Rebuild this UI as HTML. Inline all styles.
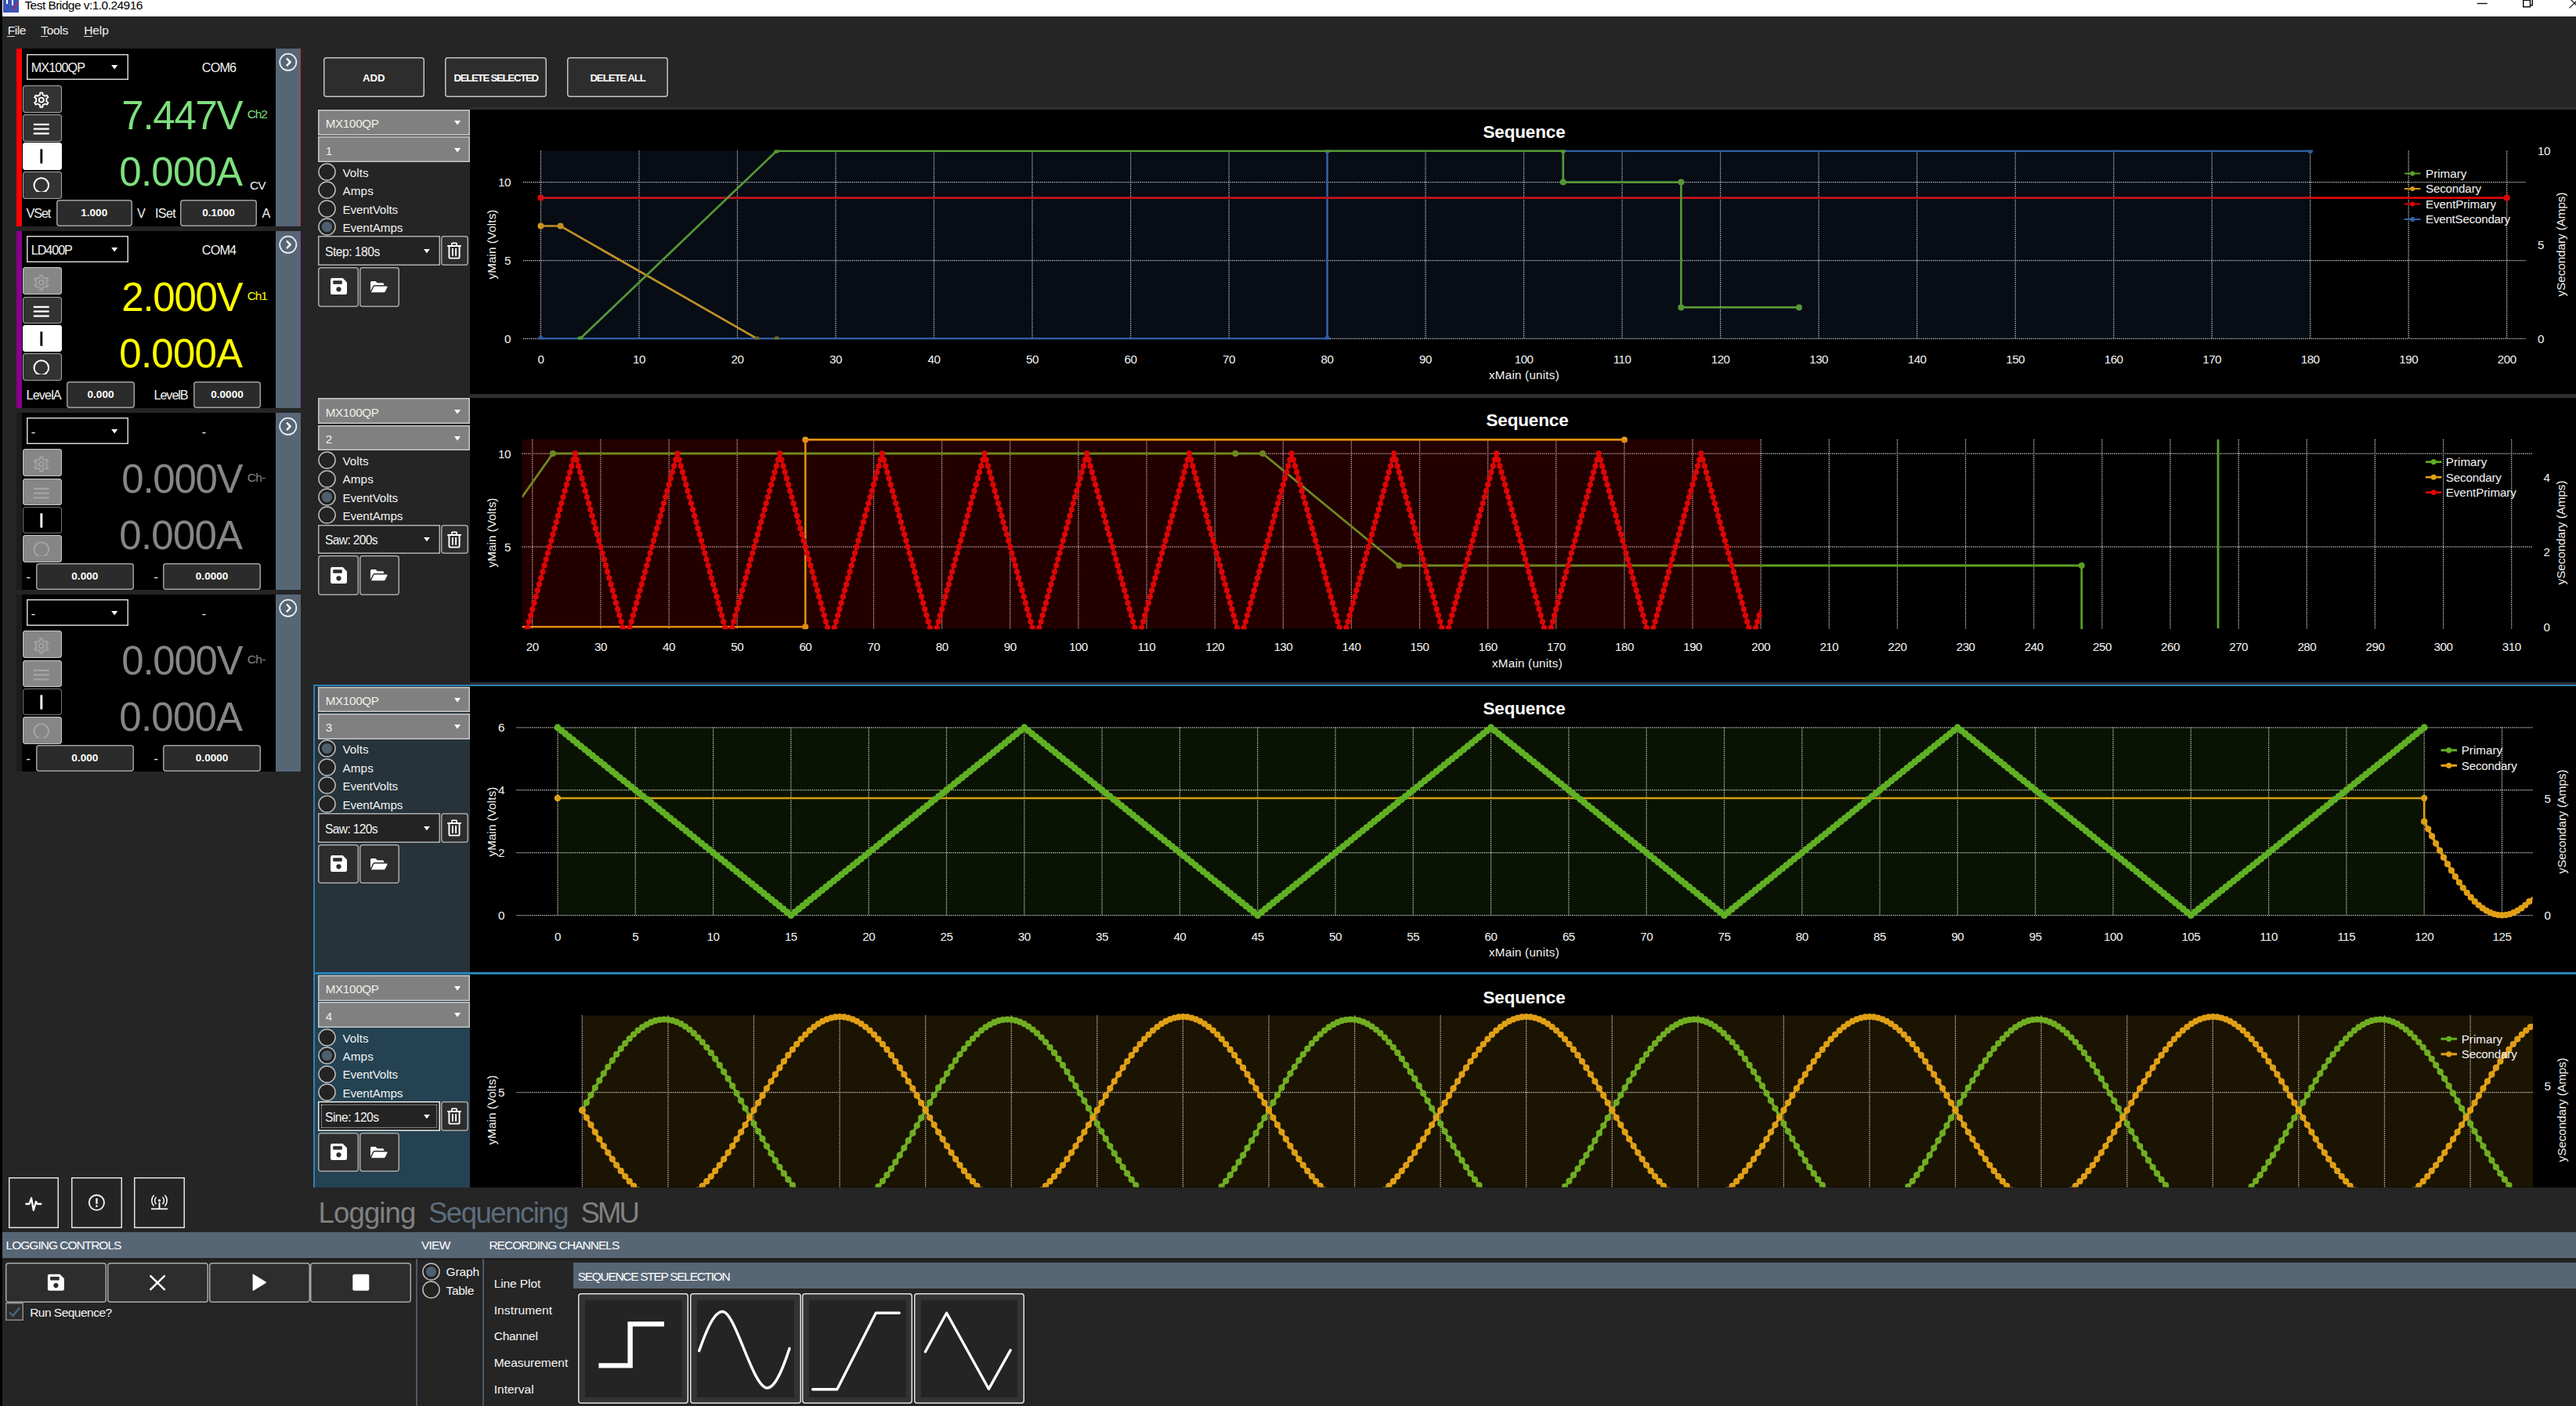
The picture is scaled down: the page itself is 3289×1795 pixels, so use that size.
<!DOCTYPE html>
<html><head><meta charset="utf-8"><title>Test Bridge</title><style>html,body{margin:0;padding:0;background:#252525;}
body{width:3289px;height:1795px;position:relative;overflow:hidden;font-family:"Liberation Sans",sans-serif;}
.a{position:absolute;box-sizing:content-box;}
.t{position:absolute;white-space:pre;line-height:normal;}
.v{transform:translate(-50%,-50%) rotate(-90deg);transform-origin:center;}
svg{overflow:visible;display:block}
</style></head><body>
<div class="a" style="left:0;top:0;width:3289px;height:1795px;background:#252525"></div>
<div class="a" style="left:0.0px;top:0.0px;width:3289.0px;height:21.0px;background:#fff;"></div>
<div class="a" style="left:4.0px;top:0.0px;width:20.0px;height:15.5px;background:#3a53b4;"></div>
<svg class="a" style="left:4px;top:0" width="20" height="16"><path d="M5 0V5M12 0V7" stroke="#fff" stroke-width="2" fill="none"/><path d="M14 12L18 3" stroke="#d02040" stroke-width="1.8"/></svg>
<div class="a" style="left:0;top:0;width:400px;height:21px;overflow:hidden">
<span class="t" style="left:31.4px;top:-2.2px;font-size:15.5px;color:#000;letter-spacing:-0.54px;">Test Bridge v:1.0.24916</span>
</div>
<svg class="a" style="left:3140px;top:0" width="149" height="21"><path d="M22.7 4.5H35.8" stroke="#111" stroke-width="1.4"/><path d="M81.7 -1V8.8H90.5V-1M81.7 0.2H90.5M91 6.7H93.3V-1" stroke="#111" stroke-width="1.5" fill="none"/><path d="M140.5 10.4L150 1M142.4 -0.6L150 7" stroke="#222" stroke-width="1.3"/></svg>
<span class="t" style="left:9.7px;top:29.7px;font-size:15.5px;color:#f0f0f0;letter-spacing:-0.47px;">File</span>
<div class="a" style="left:9.4px;top:45.6px;width:9.5px;height:1.3px;background:#e0e0e0;"></div>
<span class="t" style="left:52.2px;top:29.7px;font-size:15.5px;color:#f0f0f0;letter-spacing:-0.30px;">Tools</span>
<div class="a" style="left:51.9px;top:45.6px;width:9.5px;height:1.3px;background:#e0e0e0;"></div>
<span class="t" style="left:107.3px;top:29.7px;font-size:15.5px;color:#f0f0f0;letter-spacing:-0.12px;">Help</span>
<div class="a" style="left:107.0px;top:45.6px;width:11.2px;height:1.3px;background:#e0e0e0;"></div>
<div class="a" style="left:21.0px;top:62.3px;width:6.7px;height:226.8px;background:#ff0000;"></div>
<div class="a" style="left:27.7px;top:62.3px;width:324.0px;height:226.8px;background:#000;"></div>
<div class="a" style="left:351.5px;top:62.3px;width:32.0px;height:226.8px;background:#576675;"></div>
<div class="a" style="left:382.6px;top:62.3px;width:1.4px;height:226.8px;background:#c83040;"></div>
<div class="a" style="left:34.0px;top:68.9px;width:129.7px;height:33.6px;background:#000;box-shadow:inset 0 0 0 1.5px #d4d4d4;"></div>
<span class="t" style="left:39.8px;top:77.4px;font-size:16.2px;color:#f4f4f4;letter-spacing:-0.91px;">MX100QP</span>
<svg class="a" style="left:142px;top:83.3px" width="9" height="6"><path d="M0.2 0H8.2L4.2 5.4Z" fill="#fff"/></svg>
<span class="t" style="left:257.8px;top:77.4px;font-size:16.2px;color:#f4f4f4;letter-spacing:-0.83px;">COM6</span>
<svg class="a" style="left:355px;top:67.3px" width="26" height="26"><circle cx="12.8" cy="12.3" r="10.6" fill="none" stroke="#eef1f4" stroke-width="1.7"/><path d="M11 7.5L15.6 12.3L11 17.1" fill="none" stroke="#fff" stroke-width="2.4"/></svg>
<div class="a" style="left:28.5px;top:109.1px;width:50.7px;height:34.6px;background:#333;box-shadow:inset 0 0 0 1px #a8a8a8;border-radius:4px;"></div>
<div class="a" style="left:28.5px;top:146.3px;width:50.7px;height:34.6px;background:#333;box-shadow:inset 0 0 0 1px #a8a8a8;border-radius:4px;"></div>
<div class="a" style="left:28.5px;top:182.3px;width:50.7px;height:34.6px;background:#fff;box-shadow:inset 0 0 0 1px #fff;border-radius:4px;"></div>
<div class="a" style="left:28.5px;top:219.2px;width:50.7px;height:34.6px;background:#333;box-shadow:inset 0 0 0 1px #a8a8a8;border-radius:4px;"></div>
<svg class="a" style="left:28px;top:108.3px" width="52" height="148"><path d="M23.0 13.0L23.3 10.4L26.3 10.4L26.6 13.0L29.7 14.7L32.0 13.7L33.5 16.3L31.4 17.8L31.4 21.4L33.5 22.9L32.0 25.5L29.7 24.5L26.6 26.2L26.3 28.8L23.3 28.8L23.0 26.2L19.9 24.5L17.6 25.5L16.1 22.9L18.2 21.4L18.2 17.8L16.1 16.3L17.6 13.7L19.9 14.7Z" fill="none" stroke="#fff" stroke-width="1.9" stroke-linejoin="round"/><circle cx="24.8" cy="19.6" r="3" fill="none" stroke="#fff" stroke-width="1.9"/><rect x="14.8" y="49.75" width="19.9" height="2.3" fill="#fff"/><rect x="14.8" y="55.45" width="19.9" height="2.3" fill="#fff"/><rect x="14.8" y="61.35" width="19.9" height="2.3" fill="#fff"/><rect x="23.4" y="82.4" width="2.9" height="18.2" fill="#000"/><clipPath id="oc62"><rect x="10" y="115" width="30" height="22"/></clipPath><circle cx="24.8" cy="128.5" r="9.3" fill="none" stroke="#fff" stroke-width="2" clip-path="url(#oc62)"/></svg>
<span class="t" style="left:155.3px;top:117.7px;font-size:51px;color:#7ee07e;letter-spacing:-1.27px;">7.447V</span>
<span class="t" style="left:152.3px;top:190.1px;font-size:51px;color:#7ee07e;letter-spacing:-0.77px;">0.000A</span>
<span class="t" style="left:315.7px;top:137.0px;font-size:15.5px;color:#7ee07e;letter-spacing:-1.15px;">Ch2</span>
<span class="t" style="left:319.0px;top:228.0px;font-size:15.5px;color:#f4f4f4;letter-spacing:-1.02px;">CV</span>
<span class="t" style="left:33.6px;top:263.1px;font-size:16.2px;color:#f4f4f4;letter-spacing:-1.11px;">VSet</span>
<div class="a" style="left:72.0px;top:254.5px;width:96.5px;height:34.0px;background:#2b2b2b;box-shadow:inset 0 0 0 1.5px #a0a0a0;border-radius:4px;"></div>
<span class="t" style="left:103.2px;top:264.0px;font-size:13.6px;color:#fff;font-weight:bold;">1.000</span>
<span class="t" style="left:175.0px;top:263.1px;font-size:16.2px;color:#f4f4f4;">V</span>
<span class="t" style="left:198.0px;top:263.1px;font-size:16.2px;color:#f4f4f4;letter-spacing:-0.70px;">ISet</span>
<div class="a" style="left:230.0px;top:254.5px;width:98.0px;height:34.0px;background:#2b2b2b;box-shadow:inset 0 0 0 1.5px #a0a0a0;border-radius:4px;"></div>
<span class="t" style="left:258.2px;top:264.0px;font-size:13.6px;color:#fff;font-weight:bold;">0.1000</span>
<span class="t" style="left:334.5px;top:263.1px;font-size:16.2px;color:#f4f4f4;">A</span>
<div class="a" style="left:21.0px;top:294.5px;width:6.7px;height:226.8px;background:#88008a;"></div>
<div class="a" style="left:27.7px;top:294.5px;width:324.0px;height:226.8px;background:#000;"></div>
<div class="a" style="left:351.5px;top:294.5px;width:32.0px;height:226.8px;background:#576675;"></div>
<div class="a" style="left:382.6px;top:294.5px;width:1.4px;height:226.8px;background:#8a3aa0;"></div>
<div class="a" style="left:34.0px;top:301.1px;width:129.7px;height:33.6px;background:#000;box-shadow:inset 0 0 0 1.5px #d4d4d4;"></div>
<span class="t" style="left:39.8px;top:309.6px;font-size:16.2px;color:#f4f4f4;letter-spacing:-1.09px;">LD400P</span>
<svg class="a" style="left:142px;top:315.5px" width="9" height="6"><path d="M0.2 0H8.2L4.2 5.4Z" fill="#fff"/></svg>
<span class="t" style="left:257.8px;top:309.6px;font-size:16.2px;color:#f4f4f4;letter-spacing:-0.83px;">COM4</span>
<svg class="a" style="left:355px;top:299.5px" width="26" height="26"><circle cx="12.8" cy="12.3" r="10.6" fill="none" stroke="#eef1f4" stroke-width="1.7"/><path d="M11 7.5L15.6 12.3L11 17.1" fill="none" stroke="#fff" stroke-width="2.4"/></svg>
<div class="a" style="left:28.5px;top:341.3px;width:50.7px;height:34.6px;background:#868686;box-shadow:inset 0 0 0 1px #c8c8c8;border-radius:4px;"></div>
<div class="a" style="left:28.5px;top:378.5px;width:50.7px;height:34.6px;background:#333;box-shadow:inset 0 0 0 1px #a8a8a8;border-radius:4px;"></div>
<div class="a" style="left:28.5px;top:414.5px;width:50.7px;height:34.6px;background:#fff;box-shadow:inset 0 0 0 1px #fff;border-radius:4px;"></div>
<div class="a" style="left:28.5px;top:451.4px;width:50.7px;height:34.6px;background:#333;box-shadow:inset 0 0 0 1px #a8a8a8;border-radius:4px;"></div>
<svg class="a" style="left:28px;top:340.5px" width="52" height="148"><path d="M23.0 13.0L23.3 10.4L26.3 10.4L26.6 13.0L29.7 14.7L32.0 13.7L33.5 16.3L31.4 17.8L31.4 21.4L33.5 22.9L32.0 25.5L29.7 24.5L26.6 26.2L26.3 28.8L23.3 28.8L23.0 26.2L19.9 24.5L17.6 25.5L16.1 22.9L18.2 21.4L18.2 17.8L16.1 16.3L17.6 13.7L19.9 14.7Z" fill="none" stroke="#a4a4a4" stroke-width="1.9" stroke-linejoin="round"/><circle cx="24.8" cy="19.6" r="3" fill="none" stroke="#a4a4a4" stroke-width="1.9"/><rect x="14.8" y="49.75" width="19.9" height="2.3" fill="#fff"/><rect x="14.8" y="55.45" width="19.9" height="2.3" fill="#fff"/><rect x="14.8" y="61.35" width="19.9" height="2.3" fill="#fff"/><rect x="23.4" y="82.4" width="2.9" height="18.2" fill="#000"/><clipPath id="oc294"><rect x="10" y="115" width="30" height="22"/></clipPath><circle cx="24.8" cy="128.5" r="9.3" fill="none" stroke="#fff" stroke-width="2" clip-path="url(#oc294)"/></svg>
<span class="t" style="left:155.3px;top:349.9px;font-size:51px;color:#ffff00;letter-spacing:-1.27px;">2.000V</span>
<span class="t" style="left:152.3px;top:422.3px;font-size:51px;color:#ffff00;letter-spacing:-0.77px;">0.000A</span>
<span class="t" style="left:315.7px;top:369.2px;font-size:15.5px;color:#ffff00;letter-spacing:-1.15px;">Ch1</span>
<span class="t" style="left:33.6px;top:495.3px;font-size:16.2px;color:#f4f4f4;letter-spacing:-0.89px;">LevelA</span>
<div class="a" style="left:84.7px;top:486.7px;width:87.7px;height:34.0px;background:#2b2b2b;box-shadow:inset 0 0 0 1.5px #a0a0a0;border-radius:4px;"></div>
<span class="t" style="left:111.5px;top:496.2px;font-size:13.6px;color:#fff;font-weight:bold;">0.000</span>
<span class="t" style="left:196.5px;top:495.3px;font-size:16.2px;color:#f4f4f4;letter-spacing:-1.07px;">LevelB</span>
<div class="a" style="left:246.8px;top:486.7px;width:86.4px;height:34.0px;background:#2b2b2b;box-shadow:inset 0 0 0 1.5px #a0a0a0;border-radius:4px;"></div>
<span class="t" style="left:269.2px;top:496.2px;font-size:13.6px;color:#fff;font-weight:bold;">0.0000</span>
<div class="a" style="left:21.0px;top:526.5px;width:6.7px;height:226.8px;background:#1c1c1c;"></div>
<div class="a" style="left:27.7px;top:526.5px;width:324.0px;height:226.8px;background:#000;"></div>
<div class="a" style="left:351.5px;top:526.5px;width:32.0px;height:226.8px;background:#576675;"></div>
<div class="a" style="left:34.0px;top:533.1px;width:129.7px;height:33.6px;background:#000;box-shadow:inset 0 0 0 1.5px #d4d4d4;"></div>
<span class="t" style="left:39.8px;top:541.6px;font-size:16.2px;color:#f4f4f4;">-</span>
<svg class="a" style="left:142px;top:547.5px" width="9" height="6"><path d="M0.2 0H8.2L4.2 5.4Z" fill="#fff"/></svg>
<span class="t" style="left:257.8px;top:541.6px;font-size:16.2px;color:#f4f4f4;">-</span>
<svg class="a" style="left:355px;top:531.5px" width="26" height="26"><circle cx="12.8" cy="12.3" r="10.6" fill="none" stroke="#eef1f4" stroke-width="1.7"/><path d="M11 7.5L15.6 12.3L11 17.1" fill="none" stroke="#fff" stroke-width="2.4"/></svg>
<div class="a" style="left:28.5px;top:573.3px;width:50.7px;height:34.6px;background:#868686;box-shadow:inset 0 0 0 1px #c8c8c8;border-radius:4px;"></div>
<div class="a" style="left:28.5px;top:610.5px;width:50.7px;height:34.6px;background:#868686;box-shadow:inset 0 0 0 1px #c8c8c8;border-radius:4px;"></div>
<div class="a" style="left:28.5px;top:646.5px;width:50.7px;height:34.6px;background:#000;box-shadow:inset 0 0 0 1px #777;border-radius:4px;"></div>
<div class="a" style="left:28.5px;top:683.4px;width:50.7px;height:34.6px;background:#868686;box-shadow:inset 0 0 0 1px #c8c8c8;border-radius:4px;"></div>
<svg class="a" style="left:28px;top:572.5px" width="52" height="148"><path d="M23.0 13.0L23.3 10.4L26.3 10.4L26.6 13.0L29.7 14.7L32.0 13.7L33.5 16.3L31.4 17.8L31.4 21.4L33.5 22.9L32.0 25.5L29.7 24.5L26.6 26.2L26.3 28.8L23.3 28.8L23.0 26.2L19.9 24.5L17.6 25.5L16.1 22.9L18.2 21.4L18.2 17.8L16.1 16.3L17.6 13.7L19.9 14.7Z" fill="none" stroke="#a4a4a4" stroke-width="1.9" stroke-linejoin="round"/><circle cx="24.8" cy="19.6" r="3" fill="none" stroke="#a4a4a4" stroke-width="1.9"/><rect x="14.8" y="49.75" width="19.9" height="2.3" fill="#a4a4a4"/><rect x="14.8" y="55.45" width="19.9" height="2.3" fill="#a4a4a4"/><rect x="14.8" y="61.35" width="19.9" height="2.3" fill="#a4a4a4"/><rect x="23.4" y="82.4" width="2.9" height="18.2" fill="#fff"/><clipPath id="oc526"><rect x="10" y="115" width="30" height="22"/></clipPath><circle cx="24.8" cy="128.5" r="9.3" fill="none" stroke="#a4a4a4" stroke-width="2" clip-path="url(#oc526)"/></svg>
<span class="t" style="left:155.3px;top:581.9px;font-size:51px;color:#868686;letter-spacing:-1.27px;">0.000V</span>
<span class="t" style="left:152.3px;top:654.3px;font-size:51px;color:#868686;letter-spacing:-0.77px;">0.000A</span>
<span class="t" style="left:315.7px;top:601.2px;font-size:15.5px;color:#868686;letter-spacing:-0.66px;">Ch-</span>
<span class="t" style="left:33.6px;top:727.3px;font-size:16.2px;color:#f4f4f4;">-</span>
<div class="a" style="left:45.9px;top:718.7px;width:124.8px;height:34.0px;background:#2b2b2b;box-shadow:inset 0 0 0 1.5px #a0a0a0;border-radius:4px;"></div>
<span class="t" style="left:91.3px;top:728.2px;font-size:13.6px;color:#fff;font-weight:bold;">0.000</span>
<span class="t" style="left:196.5px;top:727.3px;font-size:16.2px;color:#f4f4f4;">-</span>
<div class="a" style="left:208.0px;top:718.7px;width:125.2px;height:34.0px;background:#2b2b2b;box-shadow:inset 0 0 0 1.5px #a0a0a0;border-radius:4px;"></div>
<span class="t" style="left:249.8px;top:728.2px;font-size:13.6px;color:#fff;font-weight:bold;">0.0000</span>
<div class="a" style="left:21.0px;top:758.5px;width:6.7px;height:226.8px;background:#1c1c1c;"></div>
<div class="a" style="left:27.7px;top:758.5px;width:324.0px;height:226.8px;background:#000;"></div>
<div class="a" style="left:351.5px;top:758.5px;width:32.0px;height:226.8px;background:#576675;"></div>
<div class="a" style="left:34.0px;top:765.1px;width:129.7px;height:33.6px;background:#000;box-shadow:inset 0 0 0 1.5px #d4d4d4;"></div>
<span class="t" style="left:39.8px;top:773.6px;font-size:16.2px;color:#f4f4f4;">-</span>
<svg class="a" style="left:142px;top:779.5px" width="9" height="6"><path d="M0.2 0H8.2L4.2 5.4Z" fill="#fff"/></svg>
<span class="t" style="left:257.8px;top:773.6px;font-size:16.2px;color:#f4f4f4;">-</span>
<svg class="a" style="left:355px;top:763.5px" width="26" height="26"><circle cx="12.8" cy="12.3" r="10.6" fill="none" stroke="#eef1f4" stroke-width="1.7"/><path d="M11 7.5L15.6 12.3L11 17.1" fill="none" stroke="#fff" stroke-width="2.4"/></svg>
<div class="a" style="left:28.5px;top:805.3px;width:50.7px;height:34.6px;background:#868686;box-shadow:inset 0 0 0 1px #c8c8c8;border-radius:4px;"></div>
<div class="a" style="left:28.5px;top:842.5px;width:50.7px;height:34.6px;background:#868686;box-shadow:inset 0 0 0 1px #c8c8c8;border-radius:4px;"></div>
<div class="a" style="left:28.5px;top:878.5px;width:50.7px;height:34.6px;background:#000;box-shadow:inset 0 0 0 1px #777;border-radius:4px;"></div>
<div class="a" style="left:28.5px;top:915.4px;width:50.7px;height:34.6px;background:#868686;box-shadow:inset 0 0 0 1px #c8c8c8;border-radius:4px;"></div>
<svg class="a" style="left:28px;top:804.5px" width="52" height="148"><path d="M23.0 13.0L23.3 10.4L26.3 10.4L26.6 13.0L29.7 14.7L32.0 13.7L33.5 16.3L31.4 17.8L31.4 21.4L33.5 22.9L32.0 25.5L29.7 24.5L26.6 26.2L26.3 28.8L23.3 28.8L23.0 26.2L19.9 24.5L17.6 25.5L16.1 22.9L18.2 21.4L18.2 17.8L16.1 16.3L17.6 13.7L19.9 14.7Z" fill="none" stroke="#a4a4a4" stroke-width="1.9" stroke-linejoin="round"/><circle cx="24.8" cy="19.6" r="3" fill="none" stroke="#a4a4a4" stroke-width="1.9"/><rect x="14.8" y="49.75" width="19.9" height="2.3" fill="#a4a4a4"/><rect x="14.8" y="55.45" width="19.9" height="2.3" fill="#a4a4a4"/><rect x="14.8" y="61.35" width="19.9" height="2.3" fill="#a4a4a4"/><rect x="23.4" y="82.4" width="2.9" height="18.2" fill="#fff"/><clipPath id="oc758"><rect x="10" y="115" width="30" height="22"/></clipPath><circle cx="24.8" cy="128.5" r="9.3" fill="none" stroke="#a4a4a4" stroke-width="2" clip-path="url(#oc758)"/></svg>
<span class="t" style="left:155.3px;top:813.9px;font-size:51px;color:#868686;letter-spacing:-1.27px;">0.000V</span>
<span class="t" style="left:152.3px;top:886.3px;font-size:51px;color:#868686;letter-spacing:-0.77px;">0.000A</span>
<span class="t" style="left:315.7px;top:833.2px;font-size:15.5px;color:#868686;letter-spacing:-0.66px;">Ch-</span>
<span class="t" style="left:33.6px;top:959.3px;font-size:16.2px;color:#f4f4f4;">-</span>
<div class="a" style="left:45.9px;top:950.7px;width:124.8px;height:34.0px;background:#2b2b2b;box-shadow:inset 0 0 0 1.5px #a0a0a0;border-radius:4px;"></div>
<span class="t" style="left:91.3px;top:960.2px;font-size:13.6px;color:#fff;font-weight:bold;">0.000</span>
<span class="t" style="left:196.5px;top:959.3px;font-size:16.2px;color:#f4f4f4;">-</span>
<div class="a" style="left:208.0px;top:950.7px;width:125.2px;height:34.0px;background:#2b2b2b;box-shadow:inset 0 0 0 1.5px #a0a0a0;border-radius:4px;"></div>
<span class="t" style="left:249.8px;top:960.2px;font-size:13.6px;color:#fff;font-weight:bold;">0.0000</span>
<div class="a" style="left:412.6px;top:73.4px;width:129.2px;height:50.8px;background:#2d2d2d;box-shadow:inset 0 0 0 1.5px #c4c4c4;border-radius:4px;"></div>
<span class="t" style="left:462.9px;top:92.1px;font-size:13.2px;color:#fff;font-weight:bold;letter-spacing:-0.03px;">ADD</span>
<div class="a" style="left:568.2px;top:73.4px;width:129.8px;height:50.8px;background:#2d2d2d;box-shadow:inset 0 0 0 1.5px #c4c4c4;border-radius:4px;"></div>
<span class="t" style="left:579.4px;top:92.1px;font-size:13.2px;color:#fff;font-weight:bold;letter-spacing:-1.24px;">DELETE SELECTED</span>
<div class="a" style="left:724.0px;top:73.4px;width:129.2px;height:50.8px;background:#2d2d2d;box-shadow:inset 0 0 0 1.5px #c4c4c4;border-radius:4px;"></div>
<span class="t" style="left:753.4px;top:92.1px;font-size:13.2px;color:#fff;font-weight:bold;letter-spacing:-1.04px;">DELETE ALL</span>
<div class="a" style="left:600.2px;top:136.7px;width:2688.8px;height:369.3px;background:#2e2e2e;"></div>
<div class="a" style="left:600.2px;top:140.0px;width:2688.8px;height:362.7px;background:#000;"></div>
<div class="a" style="left:600.2px;top:505.0px;width:2688.8px;height:369.3px;background:#2e2e2e;"></div>
<div class="a" style="left:600.2px;top:507.7px;width:2688.8px;height:363.3px;background:#000;"></div>
<div class="a" style="left:400.0px;top:874.3px;width:2889.0px;height:368.3px;background:#2a7fb2;"></div>
<div class="a" style="left:401.5px;top:876.0px;width:198.7px;height:365.0px;background:#26333a;"></div>
<div class="a" style="left:600.2px;top:876.0px;width:2688.8px;height:365.0px;background:#000;"></div>
<div class="a" style="left:400.0px;top:1242.6px;width:2889.0px;height:273.0px;background:#2a86bc;"></div>
<div class="a" style="left:401.5px;top:1244.3px;width:198.7px;height:271.3px;background:#244252;"></div>
<div class="a" style="left:600.2px;top:1244.3px;width:2688.8px;height:271.3px;background:#000;"></div>
<div class="a" style="left:406.0px;top:140.1px;width:194.2px;height:32.6px;background:#808080;box-shadow:inset 0 0 0 1.5px #c6c6c6;"></div>
<span class="t" style="left:415.7px;top:149.3px;font-size:15.2px;color:#f0f0ea;letter-spacing:-0.30px;">MX100QP</span>
<svg class="a" style="left:580px;top:154.2px" width="9" height="6"><path d="M0 0H8L4 5.6Z" fill="#fff"/></svg>
<div class="a" style="left:406.0px;top:174.4px;width:194.2px;height:32.6px;background:#808080;box-shadow:inset 0 0 0 1.5px #c6c6c6;"></div>
<span class="t" style="left:415.7px;top:183.6px;font-size:15.2px;color:#f0f0ea;">1</span>
<svg class="a" style="left:580px;top:188.5px" width="9" height="6"><path d="M0 0H8L4 5.6Z" fill="#fff"/></svg>
<svg class="a" style="left:405px;top:206.8px" width="25" height="25"><circle cx="12.5" cy="12.5" r="10.6" fill="#232323" stroke="#bdbdbd" stroke-width="1.5"/></svg>
<span class="t" style="left:437.5px;top:211.7px;font-size:15.2px;color:#f2f2f2;letter-spacing:0.05px;">Volts</span>
<svg class="a" style="left:405px;top:230.2px" width="25" height="25"><circle cx="12.5" cy="12.5" r="10.6" fill="#232323" stroke="#bdbdbd" stroke-width="1.5"/></svg>
<span class="t" style="left:437.5px;top:235.1px;font-size:15.2px;color:#f2f2f2;letter-spacing:0.16px;">Amps</span>
<svg class="a" style="left:405px;top:253.6px" width="25" height="25"><circle cx="12.5" cy="12.5" r="10.6" fill="#232323" stroke="#bdbdbd" stroke-width="1.5"/></svg>
<span class="t" style="left:437.5px;top:258.5px;font-size:15.2px;color:#f2f2f2;letter-spacing:-0.13px;">EventVolts</span>
<svg class="a" style="left:405px;top:277.0px" width="25" height="25"><circle cx="12.5" cy="12.5" r="10.6" fill="#232323" stroke="#bdbdbd" stroke-width="1.5"/><circle cx="12.5" cy="12.5" r="6.6" fill="#4f6070"/></svg>
<span class="t" style="left:437.5px;top:281.9px;font-size:15.2px;color:#f2f2f2;letter-spacing:-0.10px;">EventAmps</span>
<div class="a" style="left:406.0px;top:301.4px;width:155.8px;height:37.6px;background:#232323;box-shadow:inset 0 0 0 1.5px #b0b0b0;"></div>
<span class="t" style="left:415.0px;top:313.0px;font-size:15.6px;color:#f4f4f4;letter-spacing:-0.48px;">Step: 180s</span>
<svg class="a" style="left:541.4px;top:318.1px" width="9" height="6"><path d="M0 0H7.8L3.9 5.2Z" fill="#fff"/></svg>
<div class="a" style="left:562.6px;top:301.4px;width:35.1px;height:37.6px;background:#2d2d2d;box-shadow:inset 0 0 0 1.5px #a8a8a8;border-radius:4px;"></div>
<svg class="a" style="left:570px;top:309.4px" width="20" height="24"><path d="M1.2 5H18.8" stroke="#fff" stroke-width="2"/><path d="M6.8 4.4V2.2Q6.8 1.4 7.6 1.4H12.4Q13.2 1.4 13.2 2.2V4.4" fill="none" stroke="#fff" stroke-width="1.6"/><path d="M3.4 5.5V19Q3.4 20.6 5 20.6H15Q16.6 20.6 16.6 19V5.5" fill="none" stroke="#fff" stroke-width="1.9"/><path d="M7.9 8V17.8M12.1 8V17.8" stroke="#fff" stroke-width="1.9"/></svg>
<div class="a" style="left:406.0px;top:341.0px;width:51.5px;height:50.5px;background:#2d2d2d;box-shadow:inset 0 0 0 1.5px #a8a8a8;border-radius:4px;"></div>
<div class="a" style="left:458.5px;top:341.0px;width:51.1px;height:50.5px;background:#2d2d2d;box-shadow:inset 0 0 0 1.5px #a8a8a8;border-radius:4px;"></div>
<svg class="a" style="left:421.5px;top:355.2px" width="21" height="21"><path d="M2.2 0H15.6L21 5.4V18.8Q21 21 18.8 21H2.2Q0 21 0 18.8V2.2Q0 0 2.2 0Z" fill="#fff"/><rect x="3.2" y="3.2" width="11.6" height="4.6" rx="0.8" fill="#2d2d2d"/><circle cx="10.5" cy="14.3" r="3.1" fill="#2d2d2d"/></svg>
<svg class="a" style="left:473px;top:358.9px" width="22" height="15"><path d="M0 1.6Q0 0 1.6 0H6.6L8.8 2.2H15.6Q17.2 2.2 17.2 3.8V5H5.2Q3.8 5 3.2 6.2L0 12.6Z" fill="#fff"/><path d="M4.6 6.4H20.6Q22.2 6.4 21.5 7.8L18.6 13.4Q18.1 14.2 17.1 14.2H0.9Z" fill="#fff"/></svg>
<div class="a" style="left:406.0px;top:508.4px;width:194.2px;height:32.6px;background:#808080;box-shadow:inset 0 0 0 1.5px #c6c6c6;"></div>
<span class="t" style="left:415.7px;top:517.6px;font-size:15.2px;color:#f0f0ea;letter-spacing:-0.30px;">MX100QP</span>
<svg class="a" style="left:580px;top:522.5px" width="9" height="6"><path d="M0 0H8L4 5.6Z" fill="#fff"/></svg>
<div class="a" style="left:406.0px;top:542.7px;width:194.2px;height:32.6px;background:#808080;box-shadow:inset 0 0 0 1.5px #c6c6c6;"></div>
<span class="t" style="left:415.7px;top:551.9px;font-size:15.2px;color:#f0f0ea;">2</span>
<svg class="a" style="left:580px;top:556.8px" width="9" height="6"><path d="M0 0H8L4 5.6Z" fill="#fff"/></svg>
<svg class="a" style="left:405px;top:575.1px" width="25" height="25"><circle cx="12.5" cy="12.5" r="10.6" fill="#232323" stroke="#bdbdbd" stroke-width="1.5"/></svg>
<span class="t" style="left:437.5px;top:580.0px;font-size:15.2px;color:#f2f2f2;letter-spacing:0.05px;">Volts</span>
<svg class="a" style="left:405px;top:598.5px" width="25" height="25"><circle cx="12.5" cy="12.5" r="10.6" fill="#232323" stroke="#bdbdbd" stroke-width="1.5"/></svg>
<span class="t" style="left:437.5px;top:603.4px;font-size:15.2px;color:#f2f2f2;letter-spacing:0.16px;">Amps</span>
<svg class="a" style="left:405px;top:621.9px" width="25" height="25"><circle cx="12.5" cy="12.5" r="10.6" fill="#232323" stroke="#bdbdbd" stroke-width="1.5"/><circle cx="12.5" cy="12.5" r="6.6" fill="#4f6070"/></svg>
<span class="t" style="left:437.5px;top:626.8px;font-size:15.2px;color:#f2f2f2;letter-spacing:-0.13px;">EventVolts</span>
<svg class="a" style="left:405px;top:645.3px" width="25" height="25"><circle cx="12.5" cy="12.5" r="10.6" fill="#232323" stroke="#bdbdbd" stroke-width="1.5"/></svg>
<span class="t" style="left:437.5px;top:650.2px;font-size:15.2px;color:#f2f2f2;letter-spacing:-0.10px;">EventAmps</span>
<div class="a" style="left:406.0px;top:669.7px;width:155.8px;height:37.6px;background:#232323;box-shadow:inset 0 0 0 1.5px #b0b0b0;"></div>
<span class="t" style="left:415.0px;top:681.3px;font-size:15.6px;color:#f4f4f4;letter-spacing:-0.65px;">Saw: 200s</span>
<svg class="a" style="left:541.4px;top:686.4px" width="9" height="6"><path d="M0 0H7.8L3.9 5.2Z" fill="#fff"/></svg>
<div class="a" style="left:562.6px;top:669.7px;width:35.1px;height:37.6px;background:#2d2d2d;box-shadow:inset 0 0 0 1.5px #a8a8a8;border-radius:4px;"></div>
<svg class="a" style="left:570px;top:677.7px" width="20" height="24"><path d="M1.2 5H18.8" stroke="#fff" stroke-width="2"/><path d="M6.8 4.4V2.2Q6.8 1.4 7.6 1.4H12.4Q13.2 1.4 13.2 2.2V4.4" fill="none" stroke="#fff" stroke-width="1.6"/><path d="M3.4 5.5V19Q3.4 20.6 5 20.6H15Q16.6 20.6 16.6 19V5.5" fill="none" stroke="#fff" stroke-width="1.9"/><path d="M7.9 8V17.8M12.1 8V17.8" stroke="#fff" stroke-width="1.9"/></svg>
<div class="a" style="left:406.0px;top:709.3px;width:51.5px;height:50.5px;background:#2d2d2d;box-shadow:inset 0 0 0 1.5px #a8a8a8;border-radius:4px;"></div>
<div class="a" style="left:458.5px;top:709.3px;width:51.1px;height:50.5px;background:#2d2d2d;box-shadow:inset 0 0 0 1.5px #a8a8a8;border-radius:4px;"></div>
<svg class="a" style="left:421.5px;top:723.5px" width="21" height="21"><path d="M2.2 0H15.6L21 5.4V18.8Q21 21 18.8 21H2.2Q0 21 0 18.8V2.2Q0 0 2.2 0Z" fill="#fff"/><rect x="3.2" y="3.2" width="11.6" height="4.6" rx="0.8" fill="#2d2d2d"/><circle cx="10.5" cy="14.3" r="3.1" fill="#2d2d2d"/></svg>
<svg class="a" style="left:473px;top:727.2px" width="22" height="15"><path d="M0 1.6Q0 0 1.6 0H6.6L8.8 2.2H15.6Q17.2 2.2 17.2 3.8V5H5.2Q3.8 5 3.2 6.2L0 12.6Z" fill="#fff"/><path d="M4.6 6.4H20.6Q22.2 6.4 21.5 7.8L18.6 13.4Q18.1 14.2 17.1 14.2H0.9Z" fill="#fff"/></svg>
<div class="a" style="left:406.0px;top:876.7px;width:194.2px;height:32.6px;background:#808080;box-shadow:inset 0 0 0 1.5px #c6c6c6;"></div>
<span class="t" style="left:415.7px;top:885.9px;font-size:15.2px;color:#f0f0ea;letter-spacing:-0.30px;">MX100QP</span>
<svg class="a" style="left:580px;top:890.8px" width="9" height="6"><path d="M0 0H8L4 5.6Z" fill="#fff"/></svg>
<div class="a" style="left:406.0px;top:911.0px;width:194.2px;height:32.6px;background:#808080;box-shadow:inset 0 0 0 1.5px #c6c6c6;"></div>
<span class="t" style="left:415.7px;top:920.2px;font-size:15.2px;color:#f0f0ea;">3</span>
<svg class="a" style="left:580px;top:925.1px" width="9" height="6"><path d="M0 0H8L4 5.6Z" fill="#fff"/></svg>
<svg class="a" style="left:405px;top:943.4px" width="25" height="25"><circle cx="12.5" cy="12.5" r="10.6" fill="#232323" stroke="#bdbdbd" stroke-width="1.5"/><circle cx="12.5" cy="12.5" r="6.6" fill="#4f6070"/></svg>
<span class="t" style="left:437.5px;top:948.3px;font-size:15.2px;color:#f2f2f2;letter-spacing:0.05px;">Volts</span>
<svg class="a" style="left:405px;top:966.8px" width="25" height="25"><circle cx="12.5" cy="12.5" r="10.6" fill="#232323" stroke="#bdbdbd" stroke-width="1.5"/></svg>
<span class="t" style="left:437.5px;top:971.7px;font-size:15.2px;color:#f2f2f2;letter-spacing:0.16px;">Amps</span>
<svg class="a" style="left:405px;top:990.2px" width="25" height="25"><circle cx="12.5" cy="12.5" r="10.6" fill="#232323" stroke="#bdbdbd" stroke-width="1.5"/></svg>
<span class="t" style="left:437.5px;top:995.1px;font-size:15.2px;color:#f2f2f2;letter-spacing:-0.13px;">EventVolts</span>
<svg class="a" style="left:405px;top:1013.6px" width="25" height="25"><circle cx="12.5" cy="12.5" r="10.6" fill="#232323" stroke="#bdbdbd" stroke-width="1.5"/></svg>
<span class="t" style="left:437.5px;top:1018.5px;font-size:15.2px;color:#f2f2f2;letter-spacing:-0.10px;">EventAmps</span>
<div class="a" style="left:406.0px;top:1038.0px;width:155.8px;height:37.6px;background:#232323;box-shadow:inset 0 0 0 1.5px #b0b0b0;"></div>
<span class="t" style="left:415.0px;top:1049.6px;font-size:15.6px;color:#f4f4f4;letter-spacing:-0.65px;">Saw: 120s</span>
<svg class="a" style="left:541.4px;top:1054.7px" width="9" height="6"><path d="M0 0H7.8L3.9 5.2Z" fill="#fff"/></svg>
<div class="a" style="left:562.6px;top:1038.0px;width:35.1px;height:37.6px;background:#2d2d2d;box-shadow:inset 0 0 0 1.5px #a8a8a8;border-radius:4px;"></div>
<svg class="a" style="left:570px;top:1046.0px" width="20" height="24"><path d="M1.2 5H18.8" stroke="#fff" stroke-width="2"/><path d="M6.8 4.4V2.2Q6.8 1.4 7.6 1.4H12.4Q13.2 1.4 13.2 2.2V4.4" fill="none" stroke="#fff" stroke-width="1.6"/><path d="M3.4 5.5V19Q3.4 20.6 5 20.6H15Q16.6 20.6 16.6 19V5.5" fill="none" stroke="#fff" stroke-width="1.9"/><path d="M7.9 8V17.8M12.1 8V17.8" stroke="#fff" stroke-width="1.9"/></svg>
<div class="a" style="left:406.0px;top:1077.6px;width:51.5px;height:50.5px;background:#2d2d2d;box-shadow:inset 0 0 0 1.5px #a8a8a8;border-radius:4px;"></div>
<div class="a" style="left:458.5px;top:1077.6px;width:51.1px;height:50.5px;background:#2d2d2d;box-shadow:inset 0 0 0 1.5px #a8a8a8;border-radius:4px;"></div>
<svg class="a" style="left:421.5px;top:1091.8px" width="21" height="21"><path d="M2.2 0H15.6L21 5.4V18.8Q21 21 18.8 21H2.2Q0 21 0 18.8V2.2Q0 0 2.2 0Z" fill="#fff"/><rect x="3.2" y="3.2" width="11.6" height="4.6" rx="0.8" fill="#2d2d2d"/><circle cx="10.5" cy="14.3" r="3.1" fill="#2d2d2d"/></svg>
<svg class="a" style="left:473px;top:1095.5px" width="22" height="15"><path d="M0 1.6Q0 0 1.6 0H6.6L8.8 2.2H15.6Q17.2 2.2 17.2 3.8V5H5.2Q3.8 5 3.2 6.2L0 12.6Z" fill="#fff"/><path d="M4.6 6.4H20.6Q22.2 6.4 21.5 7.8L18.6 13.4Q18.1 14.2 17.1 14.2H0.9Z" fill="#fff"/></svg>
<div class="a" style="left:406.0px;top:1245.0px;width:194.2px;height:32.6px;background:#808080;box-shadow:inset 0 0 0 1.5px #c6c6c6;"></div>
<span class="t" style="left:415.7px;top:1254.2px;font-size:15.2px;color:#f0f0ea;letter-spacing:-0.30px;">MX100QP</span>
<svg class="a" style="left:580px;top:1259.1px" width="9" height="6"><path d="M0 0H8L4 5.6Z" fill="#fff"/></svg>
<div class="a" style="left:406.0px;top:1279.3px;width:194.2px;height:32.6px;background:#808080;box-shadow:inset 0 0 0 1.5px #c6c6c6;"></div>
<span class="t" style="left:415.7px;top:1288.5px;font-size:15.2px;color:#f0f0ea;">4</span>
<svg class="a" style="left:580px;top:1293.4px" width="9" height="6"><path d="M0 0H8L4 5.6Z" fill="#fff"/></svg>
<svg class="a" style="left:405px;top:1311.7px" width="25" height="25"><circle cx="12.5" cy="12.5" r="10.6" fill="#232323" stroke="#bdbdbd" stroke-width="1.5"/></svg>
<span class="t" style="left:437.5px;top:1316.6px;font-size:15.2px;color:#f2f2f2;letter-spacing:0.05px;">Volts</span>
<svg class="a" style="left:405px;top:1335.1px" width="25" height="25"><circle cx="12.5" cy="12.5" r="10.6" fill="#232323" stroke="#bdbdbd" stroke-width="1.5"/><circle cx="12.5" cy="12.5" r="6.6" fill="#4f6070"/></svg>
<span class="t" style="left:437.5px;top:1340.0px;font-size:15.2px;color:#f2f2f2;letter-spacing:0.16px;">Amps</span>
<svg class="a" style="left:405px;top:1358.5px" width="25" height="25"><circle cx="12.5" cy="12.5" r="10.6" fill="#232323" stroke="#bdbdbd" stroke-width="1.5"/></svg>
<span class="t" style="left:437.5px;top:1363.4px;font-size:15.2px;color:#f2f2f2;letter-spacing:-0.13px;">EventVolts</span>
<svg class="a" style="left:405px;top:1381.9px" width="25" height="25"><circle cx="12.5" cy="12.5" r="10.6" fill="#232323" stroke="#bdbdbd" stroke-width="1.5"/></svg>
<span class="t" style="left:437.5px;top:1386.8px;font-size:15.2px;color:#f2f2f2;letter-spacing:-0.10px;">EventAmps</span>
<div class="a" style="left:406.0px;top:1406.3px;width:155.8px;height:37.6px;background:#232323;box-shadow:inset 0 0 0 1.5px #e8e8e8;"></div>
<div class="a" style="left:409.5px;top:1409.8px;width:148.8px;height:30.6px;box-sizing:border-box;border:1px dotted #d0d0d0;"></div>
<span class="t" style="left:415.0px;top:1417.9px;font-size:15.6px;color:#f4f4f4;letter-spacing:-0.52px;">Sine: 120s</span>
<svg class="a" style="left:541.4px;top:1423.0px" width="9" height="6"><path d="M0 0H7.8L3.9 5.2Z" fill="#fff"/></svg>
<div class="a" style="left:562.6px;top:1406.3px;width:35.1px;height:37.6px;background:#2d2d2d;box-shadow:inset 0 0 0 1.5px #a8a8a8;border-radius:4px;"></div>
<svg class="a" style="left:570px;top:1414.3px" width="20" height="24"><path d="M1.2 5H18.8" stroke="#fff" stroke-width="2"/><path d="M6.8 4.4V2.2Q6.8 1.4 7.6 1.4H12.4Q13.2 1.4 13.2 2.2V4.4" fill="none" stroke="#fff" stroke-width="1.6"/><path d="M3.4 5.5V19Q3.4 20.6 5 20.6H15Q16.6 20.6 16.6 19V5.5" fill="none" stroke="#fff" stroke-width="1.9"/><path d="M7.9 8V17.8M12.1 8V17.8" stroke="#fff" stroke-width="1.9"/></svg>
<div class="a" style="left:406.0px;top:1445.9px;width:51.5px;height:50.5px;background:#2d2d2d;box-shadow:inset 0 0 0 1.5px #a8a8a8;border-radius:4px;"></div>
<div class="a" style="left:458.5px;top:1445.9px;width:51.1px;height:50.5px;background:#2d2d2d;box-shadow:inset 0 0 0 1.5px #a8a8a8;border-radius:4px;"></div>
<svg class="a" style="left:421.5px;top:1460.1px" width="21" height="21"><path d="M2.2 0H15.6L21 5.4V18.8Q21 21 18.8 21H2.2Q0 21 0 18.8V2.2Q0 0 2.2 0Z" fill="#fff"/><rect x="3.2" y="3.2" width="11.6" height="4.6" rx="0.8" fill="#2d2d2d"/><circle cx="10.5" cy="14.3" r="3.1" fill="#2d2d2d"/></svg>
<svg class="a" style="left:473px;top:1463.8px" width="22" height="15"><path d="M0 1.6Q0 0 1.6 0H6.6L8.8 2.2H15.6Q17.2 2.2 17.2 3.8V5H5.2Q3.8 5 3.2 6.2L0 12.6Z" fill="#fff"/><path d="M4.6 6.4H20.6Q22.2 6.4 21.5 7.8L18.6 13.4Q18.1 14.2 17.1 14.2H0.9Z" fill="#fff"/></svg>
<svg class="a" style="left:0;top:0" width="3289" height="1795" viewBox="0 0 3289 1795"><defs><marker id="mg" markerWidth="10" markerHeight="10" refX="5" refY="5" markerUnits="userSpaceOnUse"><circle cx="5" cy="5" r="4.1" fill="#60b024"/></marker><marker id="mo" markerWidth="10" markerHeight="10" refX="5" refY="5" markerUnits="userSpaceOnUse"><circle cx="5" cy="5" r="4.1" fill="#e0a016"/></marker><marker id="mr" markerWidth="10" markerHeight="10" refX="5" refY="5" markerUnits="userSpaceOnUse"><circle cx="5" cy="5" r="3.7" fill="#da0808"/></marker><marker id="mg3" markerWidth="10" markerHeight="10" refX="5" refY="5" markerUnits="userSpaceOnUse"><circle cx="5" cy="5" r="4.45" fill="#60b024"/></marker><clipPath id="c1"><rect x="668" y="191.6" width="2557" height="241.9"/></clipPath><clipPath id="c2"><rect x="666.5" y="556" width="2567" height="247.3"/></clipPath><clipPath id="c3"><rect x="659.5" y="920" width="2574.2" height="255"/></clipPath><clipPath id="c4"><rect x="659.5" y="1290" width="2574.4" height="225.6"/></clipPath></defs><g stroke="#dcdcdc" stroke-width="1.25" stroke-dasharray="1.25 1.25" fill="none"><path d="M690.5 192.6V432.4M816.0 192.6V432.4M941.5 192.6V432.4M1067.0 192.6V432.4M1192.5 192.6V432.4M1318.0 192.6V432.4M1443.6 192.6V432.4M1569.1 192.6V432.4M1694.6 192.6V432.4M1820.1 192.6V432.4M1945.6 192.6V432.4M2071.1 192.6V432.4M2196.6 192.6V432.4M2322.1 192.6V432.4M2447.6 192.6V432.4M2573.2 192.6V432.4M2698.7 192.6V432.4M2824.2 192.6V432.4M2949.7 192.6V432.4M3075.2 192.6V432.4M3200.7 192.6V432.4M668.0 432.4H3225.0M668.0 332.5H3225.0M668.0 232.6H3225.0"/></g><g clip-path="url(#c1)"><polyline points="690.5,432.4 1694.6,432.4 1694.6,192.6 2949.7,192.6" fill="none" stroke="#2f5ea2" stroke-width="2.7"/><circle cx="690.5" cy="432.4" r="3.4" fill="#2f5ea2"/><circle cx="1694.6" cy="432.4" r="3.4" fill="#2f5ea2"/><circle cx="1694.6" cy="192.6" r="3.4" fill="#2f5ea2"/><circle cx="2949.7" cy="192.6" r="3.4" fill="#2f5ea2"/><polyline points="690.5,288.5 715.6,288.5 966.6,432.4" fill="none" stroke="#d49814" stroke-width="2.7"/><circle cx="690.5" cy="288.5" r="4" fill="#d49814"/><circle cx="715.6" cy="288.5" r="4" fill="#d49814"/><circle cx="966.6" cy="432.4" r="3.2" fill="#7a6a20"/><circle cx="991.7" cy="432.4" r="3.2" fill="#7a6a20"/><polyline points="690.5,252.6 3200.7,252.6" fill="none" stroke="#da0808" stroke-width="2.7"/><circle cx="690.5" cy="252.6" r="4" fill="#da0808"/><circle cx="3200.7" cy="252.6" r="4" fill="#da0808"/><polyline points="740.7,432.4 991.7,192.6 1995.8,192.6 1995.8,232.6 2146.4,232.6 2146.4,392.4 2297.0,392.4" fill="none" stroke="#5aa026" stroke-width="2.7"/><circle cx="1995.8" cy="232.6" r="4" fill="#5aa026"/><circle cx="2146.4" cy="232.6" r="4" fill="#5aa026"/><circle cx="2146.4" cy="392.4" r="4" fill="#5aa026"/><circle cx="2297.0" cy="392.4" r="4" fill="#5aa026"/><circle cx="740.7" cy="432.4" r="3.2" fill="#5aa026"/><circle cx="991.7" cy="192.6" r="3.2" fill="#5aa026"/><circle cx="1995.8" cy="192.6" r="3.2" fill="#5aa026"/></g><rect x="690.5" y="192.6" width="2259.2" height="239.8" fill="rgba(56,96,170,0.125)"/><path d="M3070.0 221.5h20.5" stroke="#5aa026" stroke-width="2"/><circle cx="3080.2" cy="221.5" r="3" fill="#5aa026"/><path d="M3070.0 241.0h20.5" stroke="#d49814" stroke-width="2"/><circle cx="3080.2" cy="241.0" r="3" fill="#d49814"/><path d="M3070.0 260.5h20.5" stroke="#da0808" stroke-width="2"/><circle cx="3080.2" cy="260.5" r="3" fill="#da0808"/><path d="M3070.0 280.0h20.5" stroke="#3264aa" stroke-width="2"/><circle cx="3080.2" cy="280.0" r="3" fill="#3264aa"/><g stroke="#dcdcdc" stroke-width="1.25" stroke-dasharray="1.25 1.25" fill="none"><path d="M679.8 561.0V802.3M766.9 561.0V802.3M854.1 561.0V802.3M941.2 561.0V802.3M1028.3 561.0V802.3M1115.5 561.0V802.3M1202.6 561.0V802.3M1289.7 561.0V802.3M1376.9 561.0V802.3M1464.0 561.0V802.3M1551.2 561.0V802.3M1638.3 561.0V802.3M1725.4 561.0V802.3M1812.6 561.0V802.3M1899.7 561.0V802.3M1986.8 561.0V802.3M2074.0 561.0V802.3M2161.1 561.0V802.3M2248.2 561.0V802.3M2335.4 561.0V802.3M2422.5 561.0V802.3M2509.6 561.0V802.3M2596.8 561.0V802.3M2683.9 561.0V802.3M2771.0 561.0V802.3M2858.2 561.0V802.3M2945.3 561.0V802.3M3032.4 561.0V802.3M3119.6 561.0V802.3M3206.7 561.0V802.3M666.5 698.2H3233.5M666.5 579.0H3233.5"/></g><g clip-path="url(#c2)"><polyline points="666.5,634.6 705.9,579.0 1577.3,579.0 1612.1,579.0 1786.4,722.0 2657.8,722.0 2657.8,865.1" fill="none" stroke="#5aa026" stroke-width="2.8"/><circle cx="705.9" cy="579.0" r="4" fill="#5aa026"/><circle cx="1577.3" cy="579.0" r="4" fill="#5aa026"/><circle cx="1612.1" cy="579.0" r="4" fill="#5aa026"/><circle cx="1786.4" cy="722.0" r="4" fill="#5aa026"/><circle cx="2657.8" cy="722.0" r="4" fill="#5aa026"/><path d="M2832.0 561.0V802.3" stroke="#5aa026" stroke-width="2.8"/><polyline points="666.5,800.3 1028.3,800.3 1028.3,561.4 2074.0,561.4" fill="none" stroke="#e0a016" stroke-width="2.6"/><circle cx="1028.3" cy="800.3" r="4" fill="#e0a016"/><circle cx="1028.3" cy="561.4" r="4" fill="#e0a016"/><circle cx="2074.0" cy="561.4" r="4" fill="#e0a016"/><polyline points="666.7,809.5 668.9,817.4 671.1,809.5 673.3,801.5 675.4,793.6 677.6,785.6 679.8,777.7 682.0,769.7 684.2,761.8 686.3,753.8 688.5,745.9 690.7,737.9 692.9,730.0 695.0,722.0 697.2,714.1 699.4,706.1 701.6,698.2 703.8,690.3 705.9,682.3 708.1,674.4 710.3,666.4 712.5,658.5 714.7,650.5 716.8,642.6 719.0,634.6 721.2,626.7 723.4,618.7 725.5,610.8 727.7,602.8 729.9,594.9 732.1,586.9 734.3,579.0 736.4,586.9 738.6,594.9 740.8,602.8 743.0,610.8 745.2,618.7 747.3,626.7 749.5,634.6 751.7,642.6 753.9,650.5 756.0,658.5 758.2,666.4 760.4,674.4 762.6,682.3 764.8,690.3 766.9,698.2 769.1,706.1 771.3,714.1 773.5,722.0 775.6,730.0 777.8,737.9 780.0,745.9 782.2,753.8 784.4,761.8 786.5,769.7 788.7,777.7 790.9,785.6 793.1,793.6 795.3,801.5 797.4,809.5 799.6,817.4 801.8,809.5 804.0,801.5 806.1,793.6 808.3,785.6 810.5,777.7 812.7,769.7 814.9,761.8 817.0,753.8 819.2,745.9 821.4,737.9 823.6,730.0 825.8,722.0 827.9,714.1 830.1,706.1 832.3,698.2 834.5,690.3 836.6,682.3 838.8,674.4 841.0,666.4 843.2,658.5 845.4,650.5 847.5,642.6 849.7,634.6 851.9,626.7 854.1,618.7 856.2,610.8 858.4,602.8 860.6,594.9 862.8,586.9 865.0,579.0 867.1,586.9 869.3,594.9 871.5,602.8 873.7,610.8 875.9,618.7 878.0,626.7 880.2,634.6 882.4,642.6 884.6,650.5 886.7,658.5 888.9,666.4 891.1,674.4 893.3,682.3 895.5,690.3 897.6,698.2 899.8,706.1 902.0,714.1 904.2,722.0 906.4,730.0 908.5,737.9 910.7,745.9 912.9,753.8 915.1,761.8 917.2,769.7 919.4,777.7 921.6,785.6 923.8,793.6 926.0,801.5 928.1,809.5 930.3,817.4 932.5,809.5 934.7,801.5 936.8,793.6 939.0,785.6 941.2,777.7 943.4,769.7 945.6,761.8 947.7,753.8 949.9,745.9 952.1,737.9 954.3,730.0 956.5,722.0 958.6,714.1 960.8,706.1 963.0,698.2 965.2,690.3 967.3,682.3 969.5,674.4 971.7,666.4 973.9,658.5 976.1,650.5 978.2,642.6 980.4,634.6 982.6,626.7 984.8,618.7 987.0,610.8 989.1,602.8 991.3,594.9 993.5,586.9 995.7,579.0 997.8,586.9 1000.0,594.9 1002.2,602.8 1004.4,610.8 1006.6,618.7 1008.7,626.7 1010.9,634.6 1013.1,642.6 1015.3,650.5 1017.4,658.5 1019.6,666.4 1021.8,674.4 1024.0,682.3 1026.2,690.3 1028.3,698.2 1030.5,706.1 1032.7,714.1 1034.9,722.0 1037.1,730.0 1039.2,737.9 1041.4,745.9 1043.6,753.8 1045.8,761.8 1047.9,769.7 1050.1,777.7 1052.3,785.6 1054.5,793.6 1056.7,801.5 1058.8,809.5 1061.0,817.4 1063.2,809.5 1065.4,801.5 1067.6,793.6 1069.7,785.6 1071.9,777.7 1074.1,769.7 1076.3,761.8 1078.4,753.8 1080.6,745.9 1082.8,737.9 1085.0,730.0 1087.2,722.0 1089.3,714.1 1091.5,706.1 1093.7,698.2 1095.9,690.3 1098.0,682.3 1100.2,674.4 1102.4,666.4 1104.6,658.5 1106.8,650.5 1108.9,642.6 1111.1,634.6 1113.3,626.7 1115.5,618.7 1117.7,610.8 1119.8,602.8 1122.0,594.9 1124.2,586.9 1126.4,579.0 1128.5,586.9 1130.7,594.9 1132.9,602.8 1135.1,610.8 1137.3,618.7 1139.4,626.7 1141.6,634.6 1143.8,642.6 1146.0,650.5 1148.2,658.5 1150.3,666.4 1152.5,674.4 1154.7,682.3 1156.9,690.3 1159.0,698.2 1161.2,706.1 1163.4,714.1 1165.6,722.0 1167.8,730.0 1169.9,737.9 1172.1,745.9 1174.3,753.8 1176.5,761.8 1178.6,769.7 1180.8,777.7 1183.0,785.6 1185.2,793.6 1187.4,801.5 1189.5,809.5 1191.7,817.4 1193.9,809.5 1196.1,801.5 1198.3,793.6 1200.4,785.6 1202.6,777.7 1204.8,769.7 1207.0,761.8 1209.1,753.8 1211.3,745.9 1213.5,737.9 1215.7,730.0 1217.9,722.0 1220.0,714.1 1222.2,706.1 1224.4,698.2 1226.6,690.3 1228.8,682.3 1230.9,674.4 1233.1,666.4 1235.3,658.5 1237.5,650.5 1239.6,642.6 1241.8,634.6 1244.0,626.7 1246.2,618.7 1248.4,610.8 1250.5,602.8 1252.7,594.9 1254.9,586.9 1257.1,579.0 1259.2,586.9 1261.4,594.9 1263.6,602.8 1265.8,610.8 1268.0,618.7 1270.1,626.7 1272.3,634.6 1274.5,642.6 1276.7,650.5 1278.9,658.5 1281.0,666.4 1283.2,674.4 1285.4,682.3 1287.6,690.3 1289.7,698.2 1291.9,706.1 1294.1,714.1 1296.3,722.0 1298.5,730.0 1300.6,737.9 1302.8,745.9 1305.0,753.8 1307.2,761.8 1309.4,769.7 1311.5,777.7 1313.7,785.6 1315.9,793.6 1318.1,801.5 1320.2,809.5 1322.4,817.4 1324.6,809.5 1326.8,801.5 1329.0,793.6 1331.1,785.6 1333.3,777.7 1335.5,769.7 1337.7,761.8 1339.8,753.8 1342.0,745.9 1344.2,737.9 1346.4,730.0 1348.6,722.0 1350.7,714.1 1352.9,706.1 1355.1,698.2 1357.3,690.3 1359.5,682.3 1361.6,674.4 1363.8,666.4 1366.0,658.5 1368.2,650.5 1370.3,642.6 1372.5,634.6 1374.7,626.7 1376.9,618.7 1379.1,610.8 1381.2,602.8 1383.4,594.9 1385.6,586.9 1387.8,579.0 1390.0,586.9 1392.1,594.9 1394.3,602.8 1396.5,610.8 1398.7,618.7 1400.8,626.7 1403.0,634.6 1405.2,642.6 1407.4,650.5 1409.6,658.5 1411.7,666.4 1413.9,674.4 1416.1,682.3 1418.3,690.3 1420.4,698.2 1422.6,706.1 1424.8,714.1 1427.0,722.0 1429.2,730.0 1431.3,737.9 1433.5,745.9 1435.7,753.8 1437.9,761.8 1440.1,769.7 1442.2,777.7 1444.4,785.6 1446.6,793.6 1448.8,801.5 1450.9,809.5 1453.1,817.4 1455.3,809.5 1457.5,801.5 1459.7,793.6 1461.8,785.6 1464.0,777.7 1466.2,769.7 1468.4,761.8 1470.6,753.8 1472.7,745.9 1474.9,737.9 1477.1,730.0 1479.3,722.0 1481.4,714.1 1483.6,706.1 1485.8,698.2 1488.0,690.3 1490.2,682.3 1492.3,674.4 1494.5,666.4 1496.7,658.5 1498.9,650.5 1501.0,642.6 1503.2,634.6 1505.4,626.7 1507.6,618.7 1509.8,610.8 1511.9,602.8 1514.1,594.9 1516.3,586.9 1518.5,579.0 1520.7,586.9 1522.8,594.9 1525.0,602.8 1527.2,610.8 1529.4,618.7 1531.5,626.7 1533.7,634.6 1535.9,642.6 1538.1,650.5 1540.3,658.5 1542.4,666.4 1544.6,674.4 1546.8,682.3 1549.0,690.3 1551.2,698.2 1553.3,706.1 1555.5,714.1 1557.7,722.0 1559.9,730.0 1562.0,737.9 1564.2,745.9 1566.4,753.8 1568.6,761.8 1570.8,769.7 1572.9,777.7 1575.1,785.6 1577.3,793.6 1579.5,801.5 1581.6,809.5 1583.8,817.4 1586.0,809.5 1588.2,801.5 1590.4,793.6 1592.5,785.6 1594.7,777.7 1596.9,769.7 1599.1,761.8 1601.3,753.8 1603.4,745.9 1605.6,737.9 1607.8,730.0 1610.0,722.0 1612.1,714.1 1614.3,706.1 1616.5,698.2 1618.7,690.3 1620.9,682.3 1623.0,674.4 1625.2,666.4 1627.4,658.5 1629.6,650.5 1631.7,642.6 1633.9,634.6 1636.1,626.7 1638.3,618.7 1640.5,610.8 1642.6,602.8 1644.8,594.9 1647.0,586.9 1649.2,579.0 1651.4,586.9 1653.5,594.9 1655.7,602.8 1657.9,610.8 1660.1,618.7 1662.2,626.7 1664.4,634.6 1666.6,642.6 1668.8,650.5 1671.0,658.5 1673.1,666.4 1675.3,674.4 1677.5,682.3 1679.7,690.3 1681.9,698.2 1684.0,706.1 1686.2,714.1 1688.4,722.0 1690.6,730.0 1692.7,737.9 1694.9,745.9 1697.1,753.8 1699.3,761.8 1701.5,769.7 1703.6,777.7 1705.8,785.6 1708.0,793.6 1710.2,801.5 1712.3,809.5 1714.5,817.4 1716.7,809.5 1718.9,801.5 1721.1,793.6 1723.2,785.6 1725.4,777.7 1727.6,769.7 1729.8,761.8 1732.0,753.8 1734.1,745.9 1736.3,737.9 1738.5,730.0 1740.7,722.0 1742.8,714.1 1745.0,706.1 1747.2,698.2 1749.4,690.3 1751.6,682.3 1753.7,674.4 1755.9,666.4 1758.1,658.5 1760.3,650.5 1762.5,642.6 1764.6,634.6 1766.8,626.7 1769.0,618.7 1771.2,610.8 1773.3,602.8 1775.5,594.9 1777.7,586.9 1779.9,579.0 1782.1,586.9 1784.2,594.9 1786.4,602.8 1788.6,610.8 1790.8,618.7 1792.9,626.7 1795.1,634.6 1797.3,642.6 1799.5,650.5 1801.7,658.5 1803.8,666.4 1806.0,674.4 1808.2,682.3 1810.4,690.3 1812.6,698.2 1814.7,706.1 1816.9,714.1 1819.1,722.0 1821.3,730.0 1823.4,737.9 1825.6,745.9 1827.8,753.8 1830.0,761.8 1832.2,769.7 1834.3,777.7 1836.5,785.6 1838.7,793.6 1840.9,801.5 1843.1,809.5 1845.2,817.4 1847.4,809.5 1849.6,801.5 1851.8,793.6 1853.9,785.6 1856.1,777.7 1858.3,769.7 1860.5,761.8 1862.7,753.8 1864.8,745.9 1867.0,737.9 1869.2,730.0 1871.4,722.0 1873.5,714.1 1875.7,706.1 1877.9,698.2 1880.1,690.3 1882.3,682.3 1884.4,674.4 1886.6,666.4 1888.8,658.5 1891.0,650.5 1893.2,642.6 1895.3,634.6 1897.5,626.7 1899.7,618.7 1901.9,610.8 1904.0,602.8 1906.2,594.9 1908.4,586.9 1910.6,579.0 1912.8,586.9 1914.9,594.9 1917.1,602.8 1919.3,610.8 1921.5,618.7 1923.7,626.7 1925.8,634.6 1928.0,642.6 1930.2,650.5 1932.4,658.5 1934.5,666.4 1936.7,674.4 1938.9,682.3 1941.1,690.3 1943.3,698.2 1945.4,706.1 1947.6,714.1 1949.8,722.0 1952.0,730.0 1954.1,737.9 1956.3,745.9 1958.5,753.8 1960.7,761.8 1962.9,769.7 1965.0,777.7 1967.2,785.6 1969.4,793.6 1971.6,801.5 1973.8,809.5 1975.9,817.4 1978.1,809.5 1980.3,801.5 1982.5,793.6 1984.6,785.6 1986.8,777.7 1989.0,769.7 1991.2,761.8 1993.4,753.8 1995.5,745.9 1997.7,737.9 1999.9,730.0 2002.1,722.0 2004.3,714.1 2006.4,706.1 2008.6,698.2 2010.8,690.3 2013.0,682.3 2015.1,674.4 2017.3,666.4 2019.5,658.5 2021.7,650.5 2023.9,642.6 2026.0,634.6 2028.2,626.7 2030.4,618.7 2032.6,610.8 2034.7,602.8 2036.9,594.9 2039.1,586.9 2041.3,579.0 2043.5,586.9 2045.6,594.9 2047.8,602.8 2050.0,610.8 2052.2,618.7 2054.4,626.7 2056.5,634.6 2058.7,642.6 2060.9,650.5 2063.1,658.5 2065.2,666.4 2067.4,674.4 2069.6,682.3 2071.8,690.3 2074.0,698.2 2076.1,706.1 2078.3,714.1 2080.5,722.0 2082.7,730.0 2084.9,737.9 2087.0,745.9 2089.2,753.8 2091.4,761.8 2093.6,769.7 2095.7,777.7 2097.9,785.6 2100.1,793.6 2102.3,801.5 2104.5,809.5 2106.6,817.4 2108.8,809.5 2111.0,801.5 2113.2,793.6 2115.3,785.6 2117.5,777.7 2119.7,769.7 2121.9,761.8 2124.1,753.8 2126.2,745.9 2128.4,737.9 2130.6,730.0 2132.8,722.0 2135.0,714.1 2137.1,706.1 2139.3,698.2 2141.5,690.3 2143.7,682.3 2145.8,674.4 2148.0,666.4 2150.2,658.5 2152.4,650.5 2154.6,642.6 2156.7,634.6 2158.9,626.7 2161.1,618.7 2163.3,610.8 2165.5,602.8 2167.6,594.9 2169.8,586.9 2172.0,579.0 2174.2,586.9 2176.3,594.9 2178.5,602.8 2180.7,610.8 2182.9,618.7 2185.1,626.7 2187.2,634.6 2189.4,642.6 2191.6,650.5 2193.8,658.5 2195.9,666.4 2198.1,674.4 2200.3,682.3 2202.5,690.3 2204.7,698.2 2206.8,706.1 2209.0,714.1 2211.2,722.0 2213.4,730.0 2215.6,737.9 2217.7,745.9 2219.9,753.8 2222.1,761.8 2224.3,769.7 2226.4,777.7 2228.6,785.6 2230.8,793.6 2233.0,801.5 2235.2,809.5 2237.3,817.4 2239.5,809.5 2241.7,801.5 2243.9,793.6 2246.1,785.6 2248.2,777.7" fill="none" stroke="#da0808" stroke-width="2.8" stroke-linejoin="round" marker-mid="url(#mr)" marker-start="url(#mr)"/></g><rect x="666.5" y="561.0" width="1581.7" height="241.3" fill="rgba(235,0,0,0.145)"/><path d="M3097.0 589.7h20.5" stroke="#60b024" stroke-width="2.6"/><circle cx="3107.2" cy="589.7" r="3.4" fill="#60b024"/><path d="M3097.0 609.2h20.5" stroke="#e0a016" stroke-width="2.6"/><circle cx="3107.2" cy="609.2" r="3.4" fill="#e0a016"/><path d="M3097.0 628.7h20.5" stroke="#da0808" stroke-width="2.6"/><circle cx="3107.2" cy="628.7" r="3.4" fill="#da0808"/><g stroke="#dcdcdc" stroke-width="1.25" stroke-dasharray="1.25 1.25" fill="none"><path d="M712.0 928.8V1168.5M811.3 928.8V1168.5M910.6 928.8V1168.5M1009.9 928.8V1168.5M1109.2 928.8V1168.5M1208.5 928.8V1168.5M1307.8 928.8V1168.5M1407.1 928.8V1168.5M1506.4 928.8V1168.5M1605.7 928.8V1168.5M1705.0 928.8V1168.5M1804.3 928.8V1168.5M1903.6 928.8V1168.5M2002.9 928.8V1168.5M2102.2 928.8V1168.5M2201.5 928.8V1168.5M2300.8 928.8V1168.5M2400.1 928.8V1168.5M2499.4 928.8V1168.5M2598.7 928.8V1168.5M2698.0 928.8V1168.5M2797.3 928.8V1168.5M2896.6 928.8V1168.5M2995.9 928.8V1168.5M3095.2 928.8V1168.5M3194.5 928.8V1168.5M659.5 1168.5H3233.7M659.5 1088.6H3233.7M659.5 1008.7H3233.7M659.5 928.8H3233.7"/></g><polyline points="712.0,1019.0 3095.2,1019.0 3095.2,1048.9" fill="none" stroke="#e0a016" stroke-width="2.6"/><circle cx="712.0" cy="1019.0" r="4.2" fill="#e0a016"/><circle cx="3095.2" cy="1019.0" r="4.2" fill="#e0a016"/><circle cx="3095.2" cy="1048.9" r="4.2" fill="#e0a016"/><g clip-path="url(#c3)"><polyline points="3095.2,1048.9 3100.2,1058.3 3105.1,1067.6 3110.1,1076.8 3115.1,1085.9 3120.0,1094.7 3125.0,1103.2 3130.0,1111.4 3134.9,1119.2 3139.9,1126.6 3144.8,1133.5 3149.8,1139.8 3154.8,1145.7 3159.7,1150.9 3164.7,1155.5 3169.7,1159.4 3174.6,1162.6 3179.6,1165.2 3184.6,1167.0 3189.5,1168.1 3194.5,1168.5 3199.5,1168.1 3204.4,1167.0 3209.4,1165.2 3214.4,1162.6 3219.3,1159.4 3224.3,1155.5 3229.3,1150.9 3234.2,1145.7" fill="none" stroke="#e0a016" stroke-width="3.5" marker-mid="url(#mo)" marker-start="url(#mo)"/></g><polyline points="712.0,928.8 717.0,932.8 721.9,936.8 726.9,940.8 731.9,944.8 736.8,948.8 741.8,952.8 746.8,956.8 751.7,960.8 756.7,964.8 761.6,968.8 766.6,972.7 771.6,976.7 776.5,980.7 781.5,984.7 786.5,988.7 791.4,992.7 796.4,996.7 801.4,1000.7 806.3,1004.7 811.3,1008.7 816.3,1012.7 821.2,1016.7 826.2,1020.7 831.2,1024.7 836.1,1028.7 841.1,1032.7 846.1,1036.7 851.0,1040.7 856.0,1044.7 861.0,1048.7 865.9,1052.6 870.9,1056.6 875.8,1060.6 880.8,1064.6 885.8,1068.6 890.7,1072.6 895.7,1076.6 900.7,1080.6 905.6,1084.6 910.6,1088.6 915.6,1092.6 920.5,1096.6 925.5,1100.6 930.5,1104.6 935.4,1108.6 940.4,1112.6 945.4,1116.6 950.3,1120.6 955.3,1124.6 960.2,1128.5 965.2,1132.5 970.2,1136.5 975.1,1140.5 980.1,1144.5 985.1,1148.5 990.0,1152.5 995.0,1156.5 1000.0,1160.5 1004.9,1164.5 1009.9,1168.5 1014.9,1164.5 1019.8,1160.5 1024.8,1156.5 1029.8,1152.5 1034.7,1148.5 1039.7,1144.5 1044.7,1140.5 1049.6,1136.5 1054.6,1132.5 1059.5,1128.5 1064.5,1124.6 1069.5,1120.6 1074.4,1116.6 1079.4,1112.6 1084.4,1108.6 1089.3,1104.6 1094.3,1100.6 1099.3,1096.6 1104.2,1092.6 1109.2,1088.6 1114.2,1084.6 1119.1,1080.6 1124.1,1076.6 1129.1,1072.6 1134.0,1068.6 1139.0,1064.6 1144.0,1060.6 1148.9,1056.6 1153.9,1052.6 1158.8,1048.7 1163.8,1044.7 1168.8,1040.7 1173.7,1036.7 1178.7,1032.7 1183.7,1028.7 1188.6,1024.7 1193.6,1020.7 1198.6,1016.7 1203.5,1012.7 1208.5,1008.7 1213.5,1004.7 1218.4,1000.7 1223.4,996.7 1228.4,992.7 1233.3,988.7 1238.3,984.7 1243.3,980.7 1248.2,976.7 1253.2,972.7 1258.2,968.8 1263.1,964.8 1268.1,960.8 1273.0,956.8 1278.0,952.8 1283.0,948.8 1287.9,944.8 1292.9,940.8 1297.9,936.8 1302.8,932.8 1307.8,928.8 1312.8,932.8 1317.7,936.8 1322.7,940.8 1327.7,944.8 1332.6,948.8 1337.6,952.8 1342.6,956.8 1347.5,960.8 1352.5,964.8 1357.4,968.8 1362.4,972.7 1367.4,976.7 1372.3,980.7 1377.3,984.7 1382.3,988.7 1387.2,992.7 1392.2,996.7 1397.2,1000.7 1402.1,1004.7 1407.1,1008.7 1412.1,1012.7 1417.0,1016.7 1422.0,1020.7 1427.0,1024.7 1431.9,1028.7 1436.9,1032.7 1441.9,1036.7 1446.8,1040.7 1451.8,1044.7 1456.8,1048.7 1461.7,1052.6 1466.7,1056.6 1471.6,1060.6 1476.6,1064.6 1481.6,1068.6 1486.5,1072.6 1491.5,1076.6 1496.5,1080.6 1501.4,1084.6 1506.4,1088.6 1511.4,1092.6 1516.3,1096.6 1521.3,1100.6 1526.3,1104.6 1531.2,1108.6 1536.2,1112.6 1541.2,1116.6 1546.1,1120.6 1551.1,1124.6 1556.0,1128.5 1561.0,1132.5 1566.0,1136.5 1570.9,1140.5 1575.9,1144.5 1580.9,1148.5 1585.8,1152.5 1590.8,1156.5 1595.8,1160.5 1600.7,1164.5 1605.7,1168.5 1610.7,1164.5 1615.6,1160.5 1620.6,1156.5 1625.6,1152.5 1630.5,1148.5 1635.5,1144.5 1640.5,1140.5 1645.4,1136.5 1650.4,1132.5 1655.3,1128.5 1660.3,1124.6 1665.3,1120.6 1670.2,1116.6 1675.2,1112.6 1680.2,1108.6 1685.1,1104.6 1690.1,1100.6 1695.1,1096.6 1700.0,1092.6 1705.0,1088.6 1710.0,1084.6 1714.9,1080.6 1719.9,1076.6 1724.9,1072.6 1729.8,1068.6 1734.8,1064.6 1739.8,1060.6 1744.7,1056.6 1749.7,1052.6 1754.6,1048.7 1759.6,1044.7 1764.6,1040.7 1769.5,1036.7 1774.5,1032.7 1779.5,1028.7 1784.4,1024.7 1789.4,1020.7 1794.4,1016.7 1799.3,1012.7 1804.3,1008.7 1809.3,1004.7 1814.2,1000.7 1819.2,996.7 1824.2,992.7 1829.1,988.7 1834.1,984.7 1839.1,980.7 1844.0,976.7 1849.0,972.7 1854.0,968.8 1858.9,964.8 1863.9,960.8 1868.8,956.8 1873.8,952.8 1878.8,948.8 1883.7,944.8 1888.7,940.8 1893.7,936.8 1898.6,932.8 1903.6,928.8 1908.6,932.8 1913.5,936.8 1918.5,940.8 1923.5,944.8 1928.4,948.8 1933.4,952.8 1938.4,956.8 1943.3,960.8 1948.3,964.8 1953.2,968.8 1958.2,972.7 1963.2,976.7 1968.1,980.7 1973.1,984.7 1978.1,988.7 1983.0,992.7 1988.0,996.7 1993.0,1000.7 1997.9,1004.7 2002.9,1008.7 2007.9,1012.7 2012.8,1016.7 2017.8,1020.7 2022.8,1024.7 2027.7,1028.7 2032.7,1032.7 2037.7,1036.7 2042.6,1040.7 2047.6,1044.7 2052.6,1048.7 2057.5,1052.6 2062.5,1056.6 2067.4,1060.6 2072.4,1064.6 2077.4,1068.6 2082.3,1072.6 2087.3,1076.6 2092.3,1080.6 2097.2,1084.6 2102.2,1088.6 2107.2,1092.6 2112.1,1096.6 2117.1,1100.6 2122.1,1104.6 2127.0,1108.6 2132.0,1112.6 2137.0,1116.6 2141.9,1120.6 2146.9,1124.6 2151.8,1128.5 2156.8,1132.5 2161.8,1136.5 2166.7,1140.5 2171.7,1144.5 2176.7,1148.5 2181.6,1152.5 2186.6,1156.5 2191.6,1160.5 2196.5,1164.5 2201.5,1168.5 2206.5,1164.5 2211.4,1160.5 2216.4,1156.5 2221.4,1152.5 2226.3,1148.5 2231.3,1144.5 2236.3,1140.5 2241.2,1136.5 2246.2,1132.5 2251.1,1128.5 2256.1,1124.6 2261.1,1120.6 2266.0,1116.6 2271.0,1112.6 2276.0,1108.6 2280.9,1104.6 2285.9,1100.6 2290.9,1096.6 2295.8,1092.6 2300.8,1088.6 2305.8,1084.6 2310.7,1080.6 2315.7,1076.6 2320.7,1072.6 2325.6,1068.6 2330.6,1064.6 2335.6,1060.6 2340.5,1056.6 2345.5,1052.6 2350.4,1048.7 2355.4,1044.7 2360.4,1040.7 2365.3,1036.7 2370.3,1032.7 2375.3,1028.7 2380.2,1024.7 2385.2,1020.7 2390.2,1016.7 2395.1,1012.7 2400.1,1008.7 2405.1,1004.7 2410.0,1000.7 2415.0,996.7 2420.0,992.7 2424.9,988.7 2429.9,984.7 2434.9,980.7 2439.8,976.7 2444.8,972.7 2449.8,968.8 2454.7,964.8 2459.7,960.8 2464.6,956.8 2469.6,952.8 2474.6,948.8 2479.5,944.8 2484.5,940.8 2489.5,936.8 2494.4,932.8 2499.4,928.8 2504.4,932.8 2509.3,936.8 2514.3,940.8 2519.3,944.8 2524.2,948.8 2529.2,952.8 2534.2,956.8 2539.1,960.8 2544.1,964.8 2549.1,968.8 2554.0,972.7 2559.0,976.7 2563.9,980.7 2568.9,984.7 2573.9,988.7 2578.8,992.7 2583.8,996.7 2588.8,1000.7 2593.7,1004.7 2598.7,1008.7 2603.7,1012.7 2608.6,1016.7 2613.6,1020.7 2618.6,1024.7 2623.5,1028.7 2628.5,1032.7 2633.5,1036.7 2638.4,1040.7 2643.4,1044.7 2648.3,1048.7 2653.3,1052.6 2658.3,1056.6 2663.2,1060.6 2668.2,1064.6 2673.2,1068.6 2678.1,1072.6 2683.1,1076.6 2688.1,1080.6 2693.0,1084.6 2698.0,1088.6 2703.0,1092.6 2707.9,1096.6 2712.9,1100.6 2717.9,1104.6 2722.8,1108.6 2727.8,1112.6 2732.8,1116.6 2737.7,1120.6 2742.7,1124.6 2747.6,1128.5 2752.6,1132.5 2757.6,1136.5 2762.5,1140.5 2767.5,1144.5 2772.5,1148.5 2777.4,1152.5 2782.4,1156.5 2787.4,1160.5 2792.3,1164.5 2797.3,1168.5 2802.3,1164.5 2807.2,1160.5 2812.2,1156.5 2817.2,1152.5 2822.1,1148.5 2827.1,1144.5 2832.1,1140.5 2837.0,1136.5 2842.0,1132.5 2846.9,1128.5 2851.9,1124.6 2856.9,1120.6 2861.8,1116.6 2866.8,1112.6 2871.8,1108.6 2876.7,1104.6 2881.7,1100.6 2886.7,1096.6 2891.6,1092.6 2896.6,1088.6 2901.6,1084.6 2906.5,1080.6 2911.5,1076.6 2916.5,1072.6 2921.4,1068.6 2926.4,1064.6 2931.4,1060.6 2936.3,1056.6 2941.3,1052.6 2946.2,1048.7 2951.2,1044.7 2956.2,1040.7 2961.1,1036.7 2966.1,1032.7 2971.1,1028.7 2976.0,1024.7 2981.0,1020.7 2986.0,1016.7 2990.9,1012.7 2995.9,1008.7 3000.9,1004.7 3005.8,1000.7 3010.8,996.7 3015.8,992.7 3020.7,988.7 3025.7,984.7 3030.7,980.7 3035.6,976.7 3040.6,972.7 3045.5,968.8 3050.5,964.8 3055.5,960.8 3060.4,956.8 3065.4,952.8 3070.4,948.8 3075.3,944.8 3080.3,940.8 3085.3,936.8 3090.2,932.8 3095.2,928.8" fill="none" stroke="#60b024" stroke-width="5.6" stroke-linejoin="round" marker-mid="url(#mg3)" marker-start="url(#mg3)" marker-end="url(#mg3)"/><rect x="712.0" y="928.8" width="2383.2" height="239.7" fill="rgba(96,176,36,0.1)"/><path d="M3116.5 957.8h20.5" stroke="#60b024" stroke-width="3"/><circle cx="3126.7" cy="957.8" r="3.6" fill="#60b024"/><path d="M3116.5 977.3h20.5" stroke="#e0a016" stroke-width="3"/><circle cx="3126.7" cy="977.3" r="3.6" fill="#e0a016"/><g stroke="#dcdcdc" stroke-width="1.25" stroke-dasharray="1.25 1.25" fill="none"><path d="M743.4 1296.6V1515.6M853.0 1296.6V1515.6M962.5 1296.6V1515.6M1072.1 1296.6V1515.6M1181.7 1296.6V1515.6M1291.3 1296.6V1515.6M1400.8 1296.6V1515.6M1510.4 1296.6V1515.6M1620.0 1296.6V1515.6M1729.6 1296.6V1515.6M1839.2 1296.6V1515.6M1948.7 1296.6V1515.6M2058.3 1296.6V1515.6M2167.9 1296.6V1515.6M2277.4 1296.6V1515.6M2387.0 1296.6V1515.6M2496.6 1296.6V1515.6M2606.2 1296.6V1515.6M2715.8 1296.6V1515.6M2825.3 1296.6V1515.6M2934.9 1296.6V1515.6M3044.5 1296.6V1515.6M3154.1 1296.6V1515.6M659.5 1394.5H3233.9"/></g><g clip-path="url(#c4)"><polyline points="743.4,1417.4 748.9,1407.7 754.4,1398.1 759.8,1388.7 765.3,1379.5 770.8,1370.6 776.3,1362.0 781.8,1353.8 787.2,1346.1 792.7,1338.8 798.2,1332.1 803.7,1326.0 809.1,1320.5 814.6,1315.6 820.1,1311.4 825.6,1308.0 831.1,1305.2 836.5,1303.2 842.0,1302.0 847.5,1301.5 853.0,1301.8 858.5,1302.8 863.9,1304.7 869.4,1307.2 874.9,1310.5 880.4,1314.5 885.8,1319.2 891.3,1324.6 896.8,1330.5 902.3,1337.1 907.8,1344.2 913.2,1351.8 918.7,1359.9 924.2,1368.4 929.7,1377.2 935.2,1386.4 940.6,1395.8 946.1,1405.3 951.6,1415.0 957.1,1424.8 962.5,1434.6 968.0,1444.3 973.5,1453.9 979.0,1463.3 984.5,1472.5 989.9,1481.4 995.4,1490.0 1000.9,1498.2 1006.4,1505.9 1011.9,1513.2 1017.3,1519.9 1022.8,1526.0 1028.3,1531.5 1033.8,1536.4 1039.3,1540.6 1044.7,1544.0 1050.2,1546.8 1055.7,1548.8 1061.2,1550.0 1066.6,1550.5 1072.1,1550.2 1077.6,1549.2 1083.1,1547.3 1088.6,1544.8 1094.0,1541.5 1099.5,1537.5 1105.0,1532.8 1110.5,1527.4 1116.0,1521.5 1121.4,1514.9 1126.9,1507.8 1132.4,1500.2 1137.9,1492.1 1143.3,1483.6 1148.8,1474.8 1154.3,1465.6 1159.8,1456.2 1165.3,1446.7 1170.7,1437.0 1176.2,1427.2 1181.7,1417.4 1187.2,1407.7 1192.7,1398.1 1198.1,1388.7 1203.6,1379.5 1209.1,1370.6 1214.6,1362.0 1220.1,1353.8 1225.5,1346.1 1231.0,1338.8 1236.5,1332.1 1242.0,1326.0 1247.4,1320.5 1252.9,1315.6 1258.4,1311.4 1263.9,1308.0 1269.4,1305.2 1274.8,1303.2 1280.3,1302.0 1285.8,1301.5 1291.3,1301.8 1296.8,1302.8 1302.2,1304.7 1307.7,1307.2 1313.2,1310.5 1318.7,1314.5 1324.1,1319.2 1329.6,1324.6 1335.1,1330.5 1340.6,1337.1 1346.1,1344.2 1351.5,1351.8 1357.0,1359.9 1362.5,1368.4 1368.0,1377.2 1373.5,1386.4 1378.9,1395.8 1384.4,1405.3 1389.9,1415.0 1395.4,1424.8 1400.8,1434.6 1406.3,1444.3 1411.8,1453.9 1417.3,1463.3 1422.8,1472.5 1428.2,1481.4 1433.7,1490.0 1439.2,1498.2 1444.7,1505.9 1450.2,1513.2 1455.6,1519.9 1461.1,1526.0 1466.6,1531.5 1472.1,1536.4 1477.6,1540.6 1483.0,1544.0 1488.5,1546.8 1494.0,1548.8 1499.5,1550.0 1504.9,1550.5 1510.4,1550.2 1515.9,1549.2 1521.4,1547.3 1526.9,1544.8 1532.3,1541.5 1537.8,1537.5 1543.3,1532.8 1548.8,1527.4 1554.3,1521.5 1559.7,1514.9 1565.2,1507.8 1570.7,1500.2 1576.2,1492.1 1581.6,1483.6 1587.1,1474.8 1592.6,1465.6 1598.1,1456.2 1603.6,1446.7 1609.0,1437.0 1614.5,1427.2 1620.0,1417.4 1625.5,1407.7 1631.0,1398.1 1636.4,1388.7 1641.9,1379.5 1647.4,1370.6 1652.9,1362.0 1658.4,1353.8 1663.8,1346.1 1669.3,1338.8 1674.8,1332.1 1680.3,1326.0 1685.7,1320.5 1691.2,1315.6 1696.7,1311.4 1702.2,1308.0 1707.7,1305.2 1713.1,1303.2 1718.6,1302.0 1724.1,1301.5 1729.6,1301.8 1735.1,1302.8 1740.5,1304.7 1746.0,1307.2 1751.5,1310.5 1757.0,1314.5 1762.4,1319.2 1767.9,1324.6 1773.4,1330.5 1778.9,1337.1 1784.4,1344.2 1789.8,1351.8 1795.3,1359.9 1800.8,1368.4 1806.3,1377.2 1811.8,1386.4 1817.2,1395.8 1822.7,1405.3 1828.2,1415.0 1833.7,1424.8 1839.2,1434.6 1844.6,1444.3 1850.1,1453.9 1855.6,1463.3 1861.1,1472.5 1866.5,1481.4 1872.0,1490.0 1877.5,1498.2 1883.0,1505.9 1888.5,1513.2 1893.9,1519.9 1899.4,1526.0 1904.9,1531.5 1910.4,1536.4 1915.9,1540.6 1921.3,1544.0 1926.8,1546.8 1932.3,1548.8 1937.8,1550.0 1943.2,1550.5 1948.7,1550.2 1954.2,1549.2 1959.7,1547.3 1965.2,1544.8 1970.6,1541.5 1976.1,1537.5 1981.6,1532.8 1987.1,1527.4 1992.6,1521.5 1998.0,1514.9 2003.5,1507.8 2009.0,1500.2 2014.5,1492.1 2019.9,1483.6 2025.4,1474.8 2030.9,1465.6 2036.4,1456.2 2041.9,1446.7 2047.3,1437.0 2052.8,1427.2 2058.3,1417.4 2063.8,1407.7 2069.3,1398.1 2074.7,1388.7 2080.2,1379.5 2085.7,1370.6 2091.2,1362.0 2096.7,1353.8 2102.1,1346.1 2107.6,1338.8 2113.1,1332.1 2118.6,1326.0 2124.0,1320.5 2129.5,1315.6 2135.0,1311.4 2140.5,1308.0 2146.0,1305.2 2151.4,1303.2 2156.9,1302.0 2162.4,1301.5 2167.9,1301.8 2173.4,1302.8 2178.8,1304.7 2184.3,1307.2 2189.8,1310.5 2195.3,1314.5 2200.7,1319.2 2206.2,1324.6 2211.7,1330.5 2217.2,1337.1 2222.7,1344.2 2228.1,1351.8 2233.6,1359.9 2239.1,1368.4 2244.6,1377.2 2250.1,1386.4 2255.5,1395.8 2261.0,1405.3 2266.5,1415.0 2272.0,1424.8 2277.4,1434.6 2282.9,1444.3 2288.4,1453.9 2293.9,1463.3 2299.4,1472.5 2304.8,1481.4 2310.3,1490.0 2315.8,1498.2 2321.3,1505.9 2326.8,1513.2 2332.2,1519.9 2337.7,1526.0 2343.2,1531.5 2348.7,1536.4 2354.2,1540.6 2359.6,1544.0 2365.1,1546.8 2370.6,1548.8 2376.1,1550.0 2381.5,1550.5 2387.0,1550.2 2392.5,1549.2 2398.0,1547.3 2403.5,1544.8 2408.9,1541.5 2414.4,1537.5 2419.9,1532.8 2425.4,1527.4 2430.9,1521.5 2436.3,1514.9 2441.8,1507.8 2447.3,1500.2 2452.8,1492.1 2458.2,1483.6 2463.7,1474.8 2469.2,1465.6 2474.7,1456.2 2480.2,1446.7 2485.6,1437.0 2491.1,1427.2 2496.6,1417.4 2502.1,1407.7 2507.6,1398.1 2513.0,1388.7 2518.5,1379.5 2524.0,1370.6 2529.5,1362.0 2535.0,1353.8 2540.4,1346.1 2545.9,1338.8 2551.4,1332.1 2556.9,1326.0 2562.3,1320.5 2567.8,1315.6 2573.3,1311.4 2578.8,1308.0 2584.3,1305.2 2589.7,1303.2 2595.2,1302.0 2600.7,1301.5 2606.2,1301.8 2611.7,1302.8 2617.1,1304.7 2622.6,1307.2 2628.1,1310.5 2633.6,1314.5 2639.0,1319.2 2644.5,1324.6 2650.0,1330.5 2655.5,1337.1 2661.0,1344.2 2666.4,1351.8 2671.9,1359.9 2677.4,1368.4 2682.9,1377.2 2688.4,1386.4 2693.8,1395.8 2699.3,1405.3 2704.8,1415.0 2710.3,1424.8 2715.8,1434.6 2721.2,1444.3 2726.7,1453.9 2732.2,1463.3 2737.7,1472.5 2743.1,1481.4 2748.6,1490.0 2754.1,1498.2 2759.6,1505.9 2765.1,1513.2 2770.5,1519.9 2776.0,1526.0 2781.5,1531.5 2787.0,1536.4 2792.5,1540.6 2797.9,1544.0 2803.4,1546.8 2808.9,1548.8 2814.4,1550.0 2819.8,1550.5 2825.3,1550.2 2830.8,1549.2 2836.3,1547.3 2841.8,1544.8 2847.2,1541.5 2852.7,1537.5 2858.2,1532.8 2863.7,1527.4 2869.2,1521.5 2874.6,1514.9 2880.1,1507.8 2885.6,1500.2 2891.1,1492.1 2896.5,1483.6 2902.0,1474.8 2907.5,1465.6 2913.0,1456.2 2918.5,1446.7 2923.9,1437.0 2929.4,1427.2 2934.9,1417.4 2940.4,1407.7 2945.9,1398.1 2951.3,1388.7 2956.8,1379.5 2962.3,1370.6 2967.8,1362.0 2973.3,1353.8 2978.7,1346.1 2984.2,1338.8 2989.7,1332.1 2995.2,1326.0 3000.6,1320.5 3006.1,1315.6 3011.6,1311.4 3017.1,1308.0 3022.6,1305.2 3028.0,1303.2 3033.5,1302.0 3039.0,1301.5 3044.5,1301.8 3050.0,1302.8 3055.4,1304.7 3060.9,1307.2 3066.4,1310.5 3071.9,1314.5 3077.3,1319.2 3082.8,1324.6 3088.3,1330.5 3093.8,1337.1 3099.3,1344.2 3104.7,1351.8 3110.2,1359.9 3115.7,1368.4 3121.2,1377.2 3126.7,1386.4 3132.1,1395.8 3137.6,1405.3 3143.1,1415.0 3148.6,1424.8 3154.1,1434.6 3159.5,1444.3 3165.0,1453.9 3170.5,1463.3 3176.0,1472.5 3181.4,1481.4 3186.9,1490.0 3192.4,1498.2 3197.9,1505.9 3203.4,1513.2 3208.8,1519.9 3214.3,1526.0 3219.8,1531.5 3225.3,1536.4 3230.8,1540.6 3236.2,1544.0" fill="none" stroke="#60b024" stroke-width="3.6" marker-mid="url(#mg)" marker-start="url(#mg)"/><polyline points="743.4,1417.4 748.9,1426.8 754.4,1436.1 759.8,1445.3 765.3,1454.3 770.8,1463.1 776.3,1471.6 781.8,1479.8 787.2,1487.6 792.7,1494.9 798.2,1501.8 803.7,1508.2 809.1,1514.0 814.6,1519.2 820.1,1523.8 825.6,1527.7 831.1,1531.0 836.5,1533.5 842.0,1535.3 847.5,1536.4 853.0,1536.8 858.5,1536.4 863.9,1535.3 869.4,1533.5 874.9,1531.0 880.4,1527.7 885.8,1523.8 891.3,1519.2 896.8,1514.0 902.3,1508.2 907.8,1501.8 913.2,1494.9 918.7,1487.6 924.2,1479.8 929.7,1471.6 935.2,1463.1 940.6,1454.3 946.1,1445.3 951.6,1436.1 957.1,1426.8 962.5,1417.4 968.0,1408.0 973.5,1398.7 979.0,1389.5 984.5,1380.5 989.9,1371.7 995.4,1363.2 1000.9,1355.0 1006.4,1347.2 1011.9,1339.9 1017.3,1333.0 1022.8,1326.6 1028.3,1320.8 1033.8,1315.6 1039.3,1311.0 1044.7,1307.1 1050.2,1303.8 1055.7,1301.3 1061.2,1299.5 1066.6,1298.4 1072.1,1298.0 1077.6,1298.4 1083.1,1299.5 1088.6,1301.3 1094.0,1303.8 1099.5,1307.1 1105.0,1311.0 1110.5,1315.6 1116.0,1320.8 1121.4,1326.6 1126.9,1333.0 1132.4,1339.9 1137.9,1347.2 1143.3,1355.0 1148.8,1363.2 1154.3,1371.7 1159.8,1380.5 1165.3,1389.5 1170.7,1398.7 1176.2,1408.0 1181.7,1417.4 1187.2,1426.8 1192.7,1436.1 1198.1,1445.3 1203.6,1454.3 1209.1,1463.1 1214.6,1471.6 1220.1,1479.8 1225.5,1487.6 1231.0,1494.9 1236.5,1501.8 1242.0,1508.2 1247.4,1514.0 1252.9,1519.2 1258.4,1523.8 1263.9,1527.7 1269.4,1531.0 1274.8,1533.5 1280.3,1535.3 1285.8,1536.4 1291.3,1536.8 1296.8,1536.4 1302.2,1535.3 1307.7,1533.5 1313.2,1531.0 1318.7,1527.7 1324.1,1523.8 1329.6,1519.2 1335.1,1514.0 1340.6,1508.2 1346.1,1501.8 1351.5,1494.9 1357.0,1487.6 1362.5,1479.8 1368.0,1471.6 1373.5,1463.1 1378.9,1454.3 1384.4,1445.3 1389.9,1436.1 1395.4,1426.8 1400.8,1417.4 1406.3,1408.0 1411.8,1398.7 1417.3,1389.5 1422.8,1380.5 1428.2,1371.7 1433.7,1363.2 1439.2,1355.0 1444.7,1347.2 1450.2,1339.9 1455.6,1333.0 1461.1,1326.6 1466.6,1320.8 1472.1,1315.6 1477.6,1311.0 1483.0,1307.1 1488.5,1303.8 1494.0,1301.3 1499.5,1299.5 1504.9,1298.4 1510.4,1298.0 1515.9,1298.4 1521.4,1299.5 1526.9,1301.3 1532.3,1303.8 1537.8,1307.1 1543.3,1311.0 1548.8,1315.6 1554.3,1320.8 1559.7,1326.6 1565.2,1333.0 1570.7,1339.9 1576.2,1347.2 1581.6,1355.0 1587.1,1363.2 1592.6,1371.7 1598.1,1380.5 1603.6,1389.5 1609.0,1398.7 1614.5,1408.0 1620.0,1417.4 1625.5,1426.8 1631.0,1436.1 1636.4,1445.3 1641.9,1454.3 1647.4,1463.1 1652.9,1471.6 1658.4,1479.8 1663.8,1487.6 1669.3,1494.9 1674.8,1501.8 1680.3,1508.2 1685.7,1514.0 1691.2,1519.2 1696.7,1523.8 1702.2,1527.7 1707.7,1531.0 1713.1,1533.5 1718.6,1535.3 1724.1,1536.4 1729.6,1536.8 1735.1,1536.4 1740.5,1535.3 1746.0,1533.5 1751.5,1531.0 1757.0,1527.7 1762.4,1523.8 1767.9,1519.2 1773.4,1514.0 1778.9,1508.2 1784.4,1501.8 1789.8,1494.9 1795.3,1487.6 1800.8,1479.8 1806.3,1471.6 1811.8,1463.1 1817.2,1454.3 1822.7,1445.3 1828.2,1436.1 1833.7,1426.8 1839.2,1417.4 1844.6,1408.0 1850.1,1398.7 1855.6,1389.5 1861.1,1380.5 1866.5,1371.7 1872.0,1363.2 1877.5,1355.0 1883.0,1347.2 1888.5,1339.9 1893.9,1333.0 1899.4,1326.6 1904.9,1320.8 1910.4,1315.6 1915.9,1311.0 1921.3,1307.1 1926.8,1303.8 1932.3,1301.3 1937.8,1299.5 1943.2,1298.4 1948.7,1298.0 1954.2,1298.4 1959.7,1299.5 1965.2,1301.3 1970.6,1303.8 1976.1,1307.1 1981.6,1311.0 1987.1,1315.6 1992.6,1320.8 1998.0,1326.6 2003.5,1333.0 2009.0,1339.9 2014.5,1347.2 2019.9,1355.0 2025.4,1363.2 2030.9,1371.7 2036.4,1380.5 2041.9,1389.5 2047.3,1398.7 2052.8,1408.0 2058.3,1417.4 2063.8,1426.8 2069.3,1436.1 2074.7,1445.3 2080.2,1454.3 2085.7,1463.1 2091.2,1471.6 2096.7,1479.8 2102.1,1487.6 2107.6,1494.9 2113.1,1501.8 2118.6,1508.2 2124.0,1514.0 2129.5,1519.2 2135.0,1523.8 2140.5,1527.7 2146.0,1531.0 2151.4,1533.5 2156.9,1535.3 2162.4,1536.4 2167.9,1536.8 2173.4,1536.4 2178.8,1535.3 2184.3,1533.5 2189.8,1531.0 2195.3,1527.7 2200.7,1523.8 2206.2,1519.2 2211.7,1514.0 2217.2,1508.2 2222.7,1501.8 2228.1,1494.9 2233.6,1487.6 2239.1,1479.8 2244.6,1471.6 2250.1,1463.1 2255.5,1454.3 2261.0,1445.3 2266.5,1436.1 2272.0,1426.8 2277.4,1417.4 2282.9,1408.0 2288.4,1398.7 2293.9,1389.5 2299.4,1380.5 2304.8,1371.7 2310.3,1363.2 2315.8,1355.0 2321.3,1347.2 2326.8,1339.9 2332.2,1333.0 2337.7,1326.6 2343.2,1320.8 2348.7,1315.6 2354.2,1311.0 2359.6,1307.1 2365.1,1303.8 2370.6,1301.3 2376.1,1299.5 2381.5,1298.4 2387.0,1298.0 2392.5,1298.4 2398.0,1299.5 2403.5,1301.3 2408.9,1303.8 2414.4,1307.1 2419.9,1311.0 2425.4,1315.6 2430.9,1320.8 2436.3,1326.6 2441.8,1333.0 2447.3,1339.9 2452.8,1347.2 2458.2,1355.0 2463.7,1363.2 2469.2,1371.7 2474.7,1380.5 2480.2,1389.5 2485.6,1398.7 2491.1,1408.0 2496.6,1417.4 2502.1,1426.8 2507.6,1436.1 2513.0,1445.3 2518.5,1454.3 2524.0,1463.1 2529.5,1471.6 2535.0,1479.8 2540.4,1487.6 2545.9,1494.9 2551.4,1501.8 2556.9,1508.2 2562.3,1514.0 2567.8,1519.2 2573.3,1523.8 2578.8,1527.7 2584.3,1531.0 2589.7,1533.5 2595.2,1535.3 2600.7,1536.4 2606.2,1536.8 2611.7,1536.4 2617.1,1535.3 2622.6,1533.5 2628.1,1531.0 2633.6,1527.7 2639.0,1523.8 2644.5,1519.2 2650.0,1514.0 2655.5,1508.2 2661.0,1501.8 2666.4,1494.9 2671.9,1487.6 2677.4,1479.8 2682.9,1471.6 2688.4,1463.1 2693.8,1454.3 2699.3,1445.3 2704.8,1436.1 2710.3,1426.8 2715.8,1417.4 2721.2,1408.0 2726.7,1398.7 2732.2,1389.5 2737.7,1380.5 2743.1,1371.7 2748.6,1363.2 2754.1,1355.0 2759.6,1347.2 2765.1,1339.9 2770.5,1333.0 2776.0,1326.6 2781.5,1320.8 2787.0,1315.6 2792.5,1311.0 2797.9,1307.1 2803.4,1303.8 2808.9,1301.3 2814.4,1299.5 2819.8,1298.4 2825.3,1298.0 2830.8,1298.4 2836.3,1299.5 2841.8,1301.3 2847.2,1303.8 2852.7,1307.1 2858.2,1311.0 2863.7,1315.6 2869.2,1320.8 2874.6,1326.6 2880.1,1333.0 2885.6,1339.9 2891.1,1347.2 2896.5,1355.0 2902.0,1363.2 2907.5,1371.7 2913.0,1380.5 2918.5,1389.5 2923.9,1398.7 2929.4,1408.0 2934.9,1417.4 2940.4,1426.8 2945.9,1436.1 2951.3,1445.3 2956.8,1454.3 2962.3,1463.1 2967.8,1471.6 2973.3,1479.8 2978.7,1487.6 2984.2,1494.9 2989.7,1501.8 2995.2,1508.2 3000.6,1514.0 3006.1,1519.2 3011.6,1523.8 3017.1,1527.7 3022.6,1531.0 3028.0,1533.5 3033.5,1535.3 3039.0,1536.4 3044.5,1536.8 3050.0,1536.4 3055.4,1535.3 3060.9,1533.5 3066.4,1531.0 3071.9,1527.7 3077.3,1523.8 3082.8,1519.2 3088.3,1514.0 3093.8,1508.2 3099.3,1501.8 3104.7,1494.9 3110.2,1487.6 3115.7,1479.8 3121.2,1471.6 3126.7,1463.1 3132.1,1454.3 3137.6,1445.3 3143.1,1436.1 3148.6,1426.8 3154.1,1417.4 3159.5,1408.0 3165.0,1398.7 3170.5,1389.5 3176.0,1380.5 3181.4,1371.7 3186.9,1363.2 3192.4,1355.0 3197.9,1347.2 3203.4,1339.9 3208.8,1333.0 3214.3,1326.6 3219.8,1320.8 3225.3,1315.6 3230.8,1311.0 3236.2,1307.1" fill="none" stroke="#e0a016" stroke-width="3.6" marker-mid="url(#mo)" marker-start="url(#mo)"/></g><circle cx="743.4" cy="1417.4" r="4.3" fill="#e0a016"/><rect x="743.4" y="1296.6" width="2490.5" height="219.0" fill="rgba(224,160,22,0.125)"/><path d="M3116.5 1326.3h20.5" stroke="#60b024" stroke-width="3"/><circle cx="3126.7" cy="1326.3" r="3.6" fill="#60b024"/><path d="M3116.5 1345.8h20.5" stroke="#e0a016" stroke-width="3"/><circle cx="3126.7" cy="1345.8" r="3.6" fill="#e0a016"/></svg>
<span class="t" style="left:3097.0px;top:212.8px;font-size:15.2px;color:#f4f4f4;letter-spacing:0.02px;">Primary</span>
<span class="t" style="left:3097.0px;top:232.3px;font-size:15.2px;color:#f4f4f4;letter-spacing:-0.19px;">Secondary</span>
<span class="t" style="left:3097.0px;top:251.8px;font-size:15.2px;color:#f4f4f4;letter-spacing:-0.10px;">EventPrimary</span>
<span class="t" style="left:3097.0px;top:271.3px;font-size:15.2px;color:#f4f4f4;letter-spacing:-0.25px;">EventSecondary</span>
<span class="t" style="left:1893.5px;top:155.6px;font-size:22.5px;color:#fff;font-weight:bold;letter-spacing:-0.16px;">Sequence</span>
<span class="t" style="left:686.5px;top:449.6px;font-size:15.2px;color:#f4f4f4;letter-spacing:-0.50px;">0</span>
<span class="t" style="left:808.1px;top:449.6px;font-size:15.2px;color:#f4f4f4;letter-spacing:-0.50px;">10</span>
<span class="t" style="left:933.6px;top:449.6px;font-size:15.2px;color:#f4f4f4;letter-spacing:-0.50px;">20</span>
<span class="t" style="left:1059.1px;top:449.6px;font-size:15.2px;color:#f4f4f4;letter-spacing:-0.50px;">30</span>
<span class="t" style="left:1184.6px;top:449.6px;font-size:15.2px;color:#f4f4f4;letter-spacing:-0.50px;">40</span>
<span class="t" style="left:1310.1px;top:449.6px;font-size:15.2px;color:#f4f4f4;letter-spacing:-0.50px;">50</span>
<span class="t" style="left:1435.6px;top:449.6px;font-size:15.2px;color:#f4f4f4;letter-spacing:-0.50px;">60</span>
<span class="t" style="left:1561.1px;top:449.6px;font-size:15.2px;color:#f4f4f4;letter-spacing:-0.50px;">70</span>
<span class="t" style="left:1686.6px;top:449.6px;font-size:15.2px;color:#f4f4f4;letter-spacing:-0.50px;">80</span>
<span class="t" style="left:1812.1px;top:449.6px;font-size:15.2px;color:#f4f4f4;letter-spacing:-0.50px;">90</span>
<span class="t" style="left:1933.7px;top:449.6px;font-size:15.2px;color:#f4f4f4;letter-spacing:-0.50px;">100</span>
<span class="t" style="left:2059.7px;top:449.6px;font-size:15.2px;color:#f4f4f4;letter-spacing:-0.50px;">110</span>
<span class="t" style="left:2184.7px;top:449.6px;font-size:15.2px;color:#f4f4f4;letter-spacing:-0.50px;">120</span>
<span class="t" style="left:2310.2px;top:449.6px;font-size:15.2px;color:#f4f4f4;letter-spacing:-0.50px;">130</span>
<span class="t" style="left:2435.7px;top:449.6px;font-size:15.2px;color:#f4f4f4;letter-spacing:-0.50px;">140</span>
<span class="t" style="left:2561.2px;top:449.6px;font-size:15.2px;color:#f4f4f4;letter-spacing:-0.50px;">150</span>
<span class="t" style="left:2686.7px;top:449.6px;font-size:15.2px;color:#f4f4f4;letter-spacing:-0.50px;">160</span>
<span class="t" style="left:2812.2px;top:449.6px;font-size:15.2px;color:#f4f4f4;letter-spacing:-0.50px;">170</span>
<span class="t" style="left:2937.7px;top:449.6px;font-size:15.2px;color:#f4f4f4;letter-spacing:-0.50px;">180</span>
<span class="t" style="left:3063.3px;top:449.6px;font-size:15.2px;color:#f4f4f4;letter-spacing:-0.50px;">190</span>
<span class="t" style="left:3188.8px;top:449.6px;font-size:15.2px;color:#f4f4f4;letter-spacing:-0.50px;">200</span>
<span class="t" style="left:1901.0px;top:469.6px;font-size:15.2px;color:#f4f4f4;letter-spacing:0.23px;">xMain (units)</span>
<span class="t" style="left:644.0px;top:424.0px;font-size:15.2px;color:#f4f4f4;letter-spacing:-0.50px;">0</span>
<span class="t" style="left:644.0px;top:324.1px;font-size:15.2px;color:#f4f4f4;letter-spacing:-0.50px;">5</span>
<span class="t" style="left:636.1px;top:224.2px;font-size:15.2px;color:#f4f4f4;letter-spacing:-0.50px;">10</span>
<span class="t" style="left:3240.0px;top:424.0px;font-size:15.2px;color:#f4f4f4;letter-spacing:-0.50px;">0</span>
<span class="t" style="left:3240.0px;top:304.1px;font-size:15.2px;color:#f4f4f4;letter-spacing:-0.50px;">5</span>
<span class="t" style="left:3240.0px;top:184.2px;font-size:15.2px;color:#f4f4f4;letter-spacing:-0.50px;">10</span>
<span class="t v" style="left:627.4px;top:312.0px;font-size:15.2px;color:#f4f4f4;letter-spacing:0.09px;">yMain (Volts)</span>
<span class="t v" style="left:3269.0px;top:312.0px;font-size:15.2px;color:#f4f4f4;letter-spacing:-0.03px;">ySecondary (Amps)</span>
<span class="t" style="left:3122.8px;top:581.0px;font-size:15.2px;color:#f4f4f4;letter-spacing:0.02px;">Primary</span>
<span class="t" style="left:3122.8px;top:600.5px;font-size:15.2px;color:#f4f4f4;letter-spacing:-0.19px;">Secondary</span>
<span class="t" style="left:3122.8px;top:620.0px;font-size:15.2px;color:#f4f4f4;letter-spacing:-0.10px;">EventPrimary</span>
<span class="t" style="left:1897.5px;top:523.9px;font-size:22.5px;color:#fff;font-weight:bold;letter-spacing:-0.16px;">Sequence</span>
<span class="t" style="left:671.8px;top:817.4px;font-size:15.2px;color:#f4f4f4;letter-spacing:-0.50px;">20</span>
<span class="t" style="left:759.0px;top:817.4px;font-size:15.2px;color:#f4f4f4;letter-spacing:-0.50px;">30</span>
<span class="t" style="left:846.1px;top:817.4px;font-size:15.2px;color:#f4f4f4;letter-spacing:-0.50px;">40</span>
<span class="t" style="left:933.3px;top:817.4px;font-size:15.2px;color:#f4f4f4;letter-spacing:-0.50px;">50</span>
<span class="t" style="left:1020.4px;top:817.4px;font-size:15.2px;color:#f4f4f4;letter-spacing:-0.50px;">60</span>
<span class="t" style="left:1107.5px;top:817.4px;font-size:15.2px;color:#f4f4f4;letter-spacing:-0.50px;">70</span>
<span class="t" style="left:1194.7px;top:817.4px;font-size:15.2px;color:#f4f4f4;letter-spacing:-0.50px;">80</span>
<span class="t" style="left:1281.8px;top:817.4px;font-size:15.2px;color:#f4f4f4;letter-spacing:-0.50px;">90</span>
<span class="t" style="left:1364.9px;top:817.4px;font-size:15.2px;color:#f4f4f4;letter-spacing:-0.50px;">100</span>
<span class="t" style="left:1452.6px;top:817.4px;font-size:15.2px;color:#f4f4f4;letter-spacing:-0.50px;">110</span>
<span class="t" style="left:1539.2px;top:817.4px;font-size:15.2px;color:#f4f4f4;letter-spacing:-0.50px;">120</span>
<span class="t" style="left:1626.4px;top:817.4px;font-size:15.2px;color:#f4f4f4;letter-spacing:-0.50px;">130</span>
<span class="t" style="left:1713.5px;top:817.4px;font-size:15.2px;color:#f4f4f4;letter-spacing:-0.50px;">140</span>
<span class="t" style="left:1800.6px;top:817.4px;font-size:15.2px;color:#f4f4f4;letter-spacing:-0.50px;">150</span>
<span class="t" style="left:1887.8px;top:817.4px;font-size:15.2px;color:#f4f4f4;letter-spacing:-0.50px;">160</span>
<span class="t" style="left:1974.9px;top:817.4px;font-size:15.2px;color:#f4f4f4;letter-spacing:-0.50px;">170</span>
<span class="t" style="left:2062.0px;top:817.4px;font-size:15.2px;color:#f4f4f4;letter-spacing:-0.50px;">180</span>
<span class="t" style="left:2149.2px;top:817.4px;font-size:15.2px;color:#f4f4f4;letter-spacing:-0.50px;">190</span>
<span class="t" style="left:2236.3px;top:817.4px;font-size:15.2px;color:#f4f4f4;letter-spacing:-0.50px;">200</span>
<span class="t" style="left:2323.4px;top:817.4px;font-size:15.2px;color:#f4f4f4;letter-spacing:-0.50px;">210</span>
<span class="t" style="left:2410.6px;top:817.4px;font-size:15.2px;color:#f4f4f4;letter-spacing:-0.50px;">220</span>
<span class="t" style="left:2497.7px;top:817.4px;font-size:15.2px;color:#f4f4f4;letter-spacing:-0.50px;">230</span>
<span class="t" style="left:2584.8px;top:817.4px;font-size:15.2px;color:#f4f4f4;letter-spacing:-0.50px;">240</span>
<span class="t" style="left:2672.0px;top:817.4px;font-size:15.2px;color:#f4f4f4;letter-spacing:-0.50px;">250</span>
<span class="t" style="left:2759.1px;top:817.4px;font-size:15.2px;color:#f4f4f4;letter-spacing:-0.50px;">260</span>
<span class="t" style="left:2846.2px;top:817.4px;font-size:15.2px;color:#f4f4f4;letter-spacing:-0.50px;">270</span>
<span class="t" style="left:2933.4px;top:817.4px;font-size:15.2px;color:#f4f4f4;letter-spacing:-0.50px;">280</span>
<span class="t" style="left:3020.5px;top:817.4px;font-size:15.2px;color:#f4f4f4;letter-spacing:-0.50px;">290</span>
<span class="t" style="left:3107.6px;top:817.4px;font-size:15.2px;color:#f4f4f4;letter-spacing:-0.50px;">300</span>
<span class="t" style="left:3194.8px;top:817.4px;font-size:15.2px;color:#f4f4f4;letter-spacing:-0.50px;">310</span>
<span class="t" style="left:1905.0px;top:838.0px;font-size:15.2px;color:#f4f4f4;letter-spacing:0.23px;">xMain (units)</span>
<span class="t" style="left:644.0px;top:689.8px;font-size:15.2px;color:#f4f4f4;letter-spacing:-0.50px;">5</span>
<span class="t" style="left:636.1px;top:570.6px;font-size:15.2px;color:#f4f4f4;letter-spacing:-0.50px;">10</span>
<span class="t" style="left:3247.5px;top:791.9px;font-size:15.2px;color:#f4f4f4;letter-spacing:-0.50px;">0</span>
<span class="t" style="left:3247.5px;top:696.4px;font-size:15.2px;color:#f4f4f4;letter-spacing:-0.50px;">2</span>
<span class="t" style="left:3247.5px;top:600.8px;font-size:15.2px;color:#f4f4f4;letter-spacing:-0.50px;">4</span>
<span class="t v" style="left:627.4px;top:680.0px;font-size:15.2px;color:#f4f4f4;letter-spacing:0.09px;">yMain (Volts)</span>
<span class="t v" style="left:3269.0px;top:680.0px;font-size:15.2px;color:#f4f4f4;letter-spacing:-0.03px;">ySecondary (Amps)</span>
<span class="t" style="left:3142.7px;top:949.1px;font-size:15.2px;color:#f4f4f4;letter-spacing:0.02px;">Primary</span>
<span class="t" style="left:3142.7px;top:968.6px;font-size:15.2px;color:#f4f4f4;letter-spacing:-0.19px;">Secondary</span>
<span class="t" style="left:1893.5px;top:892.2px;font-size:22.5px;color:#fff;font-weight:bold;letter-spacing:-0.16px;">Sequence</span>
<span class="t" style="left:708.0px;top:1186.8px;font-size:15.2px;color:#f4f4f4;letter-spacing:-0.50px;">0</span>
<span class="t" style="left:807.3px;top:1186.8px;font-size:15.2px;color:#f4f4f4;letter-spacing:-0.50px;">5</span>
<span class="t" style="left:902.6px;top:1186.8px;font-size:15.2px;color:#f4f4f4;letter-spacing:-0.50px;">10</span>
<span class="t" style="left:1001.9px;top:1186.8px;font-size:15.2px;color:#f4f4f4;letter-spacing:-0.50px;">15</span>
<span class="t" style="left:1101.2px;top:1186.8px;font-size:15.2px;color:#f4f4f4;letter-spacing:-0.50px;">20</span>
<span class="t" style="left:1200.5px;top:1186.8px;font-size:15.2px;color:#f4f4f4;letter-spacing:-0.50px;">25</span>
<span class="t" style="left:1299.8px;top:1186.8px;font-size:15.2px;color:#f4f4f4;letter-spacing:-0.50px;">30</span>
<span class="t" style="left:1399.1px;top:1186.8px;font-size:15.2px;color:#f4f4f4;letter-spacing:-0.50px;">35</span>
<span class="t" style="left:1498.4px;top:1186.8px;font-size:15.2px;color:#f4f4f4;letter-spacing:-0.50px;">40</span>
<span class="t" style="left:1597.7px;top:1186.8px;font-size:15.2px;color:#f4f4f4;letter-spacing:-0.50px;">45</span>
<span class="t" style="left:1697.0px;top:1186.8px;font-size:15.2px;color:#f4f4f4;letter-spacing:-0.50px;">50</span>
<span class="t" style="left:1796.3px;top:1186.8px;font-size:15.2px;color:#f4f4f4;letter-spacing:-0.50px;">55</span>
<span class="t" style="left:1895.6px;top:1186.8px;font-size:15.2px;color:#f4f4f4;letter-spacing:-0.50px;">60</span>
<span class="t" style="left:1994.9px;top:1186.8px;font-size:15.2px;color:#f4f4f4;letter-spacing:-0.50px;">65</span>
<span class="t" style="left:2094.2px;top:1186.8px;font-size:15.2px;color:#f4f4f4;letter-spacing:-0.50px;">70</span>
<span class="t" style="left:2193.5px;top:1186.8px;font-size:15.2px;color:#f4f4f4;letter-spacing:-0.50px;">75</span>
<span class="t" style="left:2292.8px;top:1186.8px;font-size:15.2px;color:#f4f4f4;letter-spacing:-0.50px;">80</span>
<span class="t" style="left:2392.1px;top:1186.8px;font-size:15.2px;color:#f4f4f4;letter-spacing:-0.50px;">85</span>
<span class="t" style="left:2491.4px;top:1186.8px;font-size:15.2px;color:#f4f4f4;letter-spacing:-0.50px;">90</span>
<span class="t" style="left:2590.7px;top:1186.8px;font-size:15.2px;color:#f4f4f4;letter-spacing:-0.50px;">95</span>
<span class="t" style="left:2686.1px;top:1186.8px;font-size:15.2px;color:#f4f4f4;letter-spacing:-0.50px;">100</span>
<span class="t" style="left:2785.4px;top:1186.8px;font-size:15.2px;color:#f4f4f4;letter-spacing:-0.50px;">105</span>
<span class="t" style="left:2885.2px;top:1186.8px;font-size:15.2px;color:#f4f4f4;letter-spacing:-0.50px;">110</span>
<span class="t" style="left:2984.5px;top:1186.8px;font-size:15.2px;color:#f4f4f4;letter-spacing:-0.50px;">115</span>
<span class="t" style="left:3083.3px;top:1186.8px;font-size:15.2px;color:#f4f4f4;letter-spacing:-0.50px;">120</span>
<span class="t" style="left:3182.6px;top:1186.8px;font-size:15.2px;color:#f4f4f4;letter-spacing:-0.50px;">125</span>
<span class="t" style="left:1901.0px;top:1206.5px;font-size:15.2px;color:#f4f4f4;letter-spacing:0.23px;">xMain (units)</span>
<span class="t" style="left:636.0px;top:1160.1px;font-size:15.2px;color:#f4f4f4;">0</span>
<span class="t" style="left:636.0px;top:1080.2px;font-size:15.2px;color:#f4f4f4;">2</span>
<span class="t" style="left:636.0px;top:1000.3px;font-size:15.2px;color:#f4f4f4;">4</span>
<span class="t" style="left:636.0px;top:920.4px;font-size:15.2px;color:#f4f4f4;">6</span>
<span class="t" style="left:3248.5px;top:1160.1px;font-size:15.2px;color:#f4f4f4;">0</span>
<span class="t" style="left:3248.5px;top:1010.6px;font-size:15.2px;color:#f4f4f4;">5</span>
<span class="t v" style="left:627.4px;top:1048.7px;font-size:15.2px;color:#f4f4f4;letter-spacing:0.09px;">yMain (Volts)</span>
<span class="t v" style="left:3269.5px;top:1048.7px;font-size:15.2px;color:#f4f4f4;letter-spacing:-0.03px;">ySecondary (Amps)</span>
<span class="t" style="left:3142.7px;top:1317.6px;font-size:15.2px;color:#f4f4f4;letter-spacing:0.02px;">Primary</span>
<span class="t" style="left:3142.7px;top:1337.1px;font-size:15.2px;color:#f4f4f4;letter-spacing:-0.19px;">Secondary</span>
<span class="t" style="left:1893.5px;top:1260.5px;font-size:22.5px;color:#fff;font-weight:bold;letter-spacing:-0.16px;">Sequence</span>
<span class="t" style="left:636.0px;top:1386.1px;font-size:15.2px;color:#f4f4f4;">5</span>
<span class="t" style="left:3248.5px;top:1378.0px;font-size:15.2px;color:#f4f4f4;">5</span>
<span class="t v" style="left:627.4px;top:1416.5px;font-size:15.2px;color:#f4f4f4;letter-spacing:0.09px;">yMain (Volts)</span>
<span class="t v" style="left:3269.5px;top:1416.5px;font-size:15.2px;color:#f4f4f4;letter-spacing:-0.03px;">ySecondary (Amps)</span>
<div class="a" style="left:10.5px;top:1502.8px;width:64.8px;height:64.8px;background:#242424;box-shadow:inset 0 0 0 1.5px #e2e2e2;"></div>
<div class="a" style="left:90.9px;top:1502.8px;width:64.8px;height:64.8px;background:#242424;box-shadow:inset 0 0 0 1.5px #e2e2e2;"></div>
<div class="a" style="left:171.1px;top:1502.8px;width:64.8px;height:64.8px;background:#242424;box-shadow:inset 0 0 0 1.5px #e2e2e2;"></div>
<svg class="a" style="left:0;top:1500px" width="250" height="70"><path d="M32.5 37H37.5L40 29.5L42.8 45L46 34L47.5 37H53.2" fill="none" stroke="#fff" stroke-width="2.3" stroke-linejoin="round"/><circle cx="123.4" cy="35.3" r="9.6" fill="none" stroke="#f0f0f0" stroke-width="1.9"/><rect x="122.3" y="29.8" width="2.3" height="7.2" fill="#fff"/><rect x="122.3" y="38.6" width="2.3" height="2.3" fill="#fff"/><circle cx="203.5" cy="32.6" r="1.7" fill="#fff"/><path d="M199.6 28.2A6 6 0 0 0 199.6 37.2M207.4 28.2A6 6 0 0 1 207.4 37.2M196.6 25.8A10 10 0 0 0 196.6 39.8M210.4 25.8A10 10 0 0 1 210.4 39.8" fill="none" stroke="#fff" stroke-width="1.5"/><path d="M203.5 35V43M193 43.4H214" stroke="#fff" stroke-width="1.9"/></svg>
<span class="t" style="left:406.5px;top:1528.1px;font-size:36.5px;color:#818181;letter-spacing:-0.84px;">Logging</span>
<span class="t" style="left:547.0px;top:1528.1px;font-size:36.5px;color:#5d6d7c;letter-spacing:-1.48px;">Sequencing</span>
<span class="t" style="left:741.5px;top:1528.1px;font-size:36.5px;color:#818181;letter-spacing:-2.87px;">SMU</span>
<div class="a" style="left:3.4px;top:1572.6px;width:3289.0px;height:33.9px;background:#576675;"></div>
<span class="t" style="left:7.6px;top:1581.3px;font-size:15.5px;color:#fff;letter-spacing:-1.00px;">LOGGING CONTROLS</span>
<span class="t" style="left:538.0px;top:1581.3px;font-size:15.5px;color:#fff;letter-spacing:-0.78px;">VIEW</span>
<span class="t" style="left:624.4px;top:1581.3px;font-size:15.5px;color:#fff;letter-spacing:-0.97px;">RECORDING CHANNELS</span>
<div class="a" style="left:3.4px;top:1606.5px;width:3289.0px;height:2.2px;background:#1d1d1d;"></div>
<div class="a" style="left:531.3px;top:1606.5px;width:2.0px;height:190.0px;background:#4b5966;"></div>
<div class="a" style="left:616.2px;top:1606.5px;width:2.0px;height:190.0px;background:#4b5966;"></div>
<div class="a" style="left:6.9px;top:1612.2px;width:128.9px;height:50.4px;background:#2d2d2d;box-shadow:inset 0 0 0 1.5px #a8a8a8;border-radius:4px;"></div>
<div class="a" style="left:137.3px;top:1612.2px;width:128.9px;height:50.4px;background:#2d2d2d;box-shadow:inset 0 0 0 1.5px #a8a8a8;border-radius:4px;"></div>
<div class="a" style="left:266.7px;top:1612.2px;width:128.9px;height:50.4px;background:#2d2d2d;box-shadow:inset 0 0 0 1.5px #a8a8a8;border-radius:4px;"></div>
<div class="a" style="left:396.2px;top:1612.2px;width:128.9px;height:50.4px;background:#2d2d2d;box-shadow:inset 0 0 0 1.5px #a8a8a8;border-radius:4px;"></div>
<svg class="a" style="left:0;top:1612px" width="530" height="52"><g transform="translate(60.9,14.8)"><path d="M2.2 0H15.6L21 5.4V18.8Q21 21 18.8 21H2.2Q0 21 0 18.8V2.2Q0 0 2.2 0Z" fill="#fff"/><rect x="3.2" y="3.2" width="11.6" height="4.6" rx="0.8" fill="#2d2d2d"/><circle cx="10.5" cy="14.3" r="3.1" fill="#2d2d2d"/></g><path d="M191.6 16.4L210.6 34.8M210.6 16.4L191.6 34.8" stroke="#fff" stroke-width="2.5" fill="none"/><path d="M322.6 15.3Q322.6 14.2 323.6 14.8L339.6 24.6Q340.4 25.3 339.6 26L323.6 35.8Q322.6 36.4 322.6 35.3Z" fill="#fff"/><rect x="450.3" y="14.8" width="21" height="21" rx="2" fill="#fff"/></svg>
<div class="a" style="left:6.9px;top:1663.0px;width:22.9px;height:23.4px;background:#2c2c2c;box-shadow:inset 0 0 0 1.5px #8c8c8c;"></div>
<svg class="a" style="left:7px;top:1663px" width="24" height="24"><path d="M5.2 12.6L9.6 16.8L18.2 6.4" fill="none" stroke="#4e5f6e" stroke-width="2.6"/></svg>
<span class="t" style="left:38.2px;top:1667.1px;font-size:15.5px;color:#f4f4f4;letter-spacing:-0.52px;">Run Sequence?</span>
<svg class="a" style="left:537.5px;top:1610.8px" width="25" height="25"><circle cx="12.5" cy="12.5" r="10.6" fill="#232323" stroke="#bdbdbd" stroke-width="1.5"/><circle cx="12.5" cy="12.5" r="6.6" fill="#4f6070"/></svg>
<span class="t" style="left:569.5px;top:1615.0px;font-size:15.5px;color:#f4f4f4;letter-spacing:-0.12px;">Graph</span>
<svg class="a" style="left:537.5px;top:1634.4px" width="25" height="25"><circle cx="12.5" cy="12.5" r="10.6" fill="#232323" stroke="#bdbdbd" stroke-width="1.5"/></svg>
<span class="t" style="left:569.5px;top:1638.6px;font-size:15.5px;color:#f4f4f4;letter-spacing:-0.31px;">Table</span>
<span class="t" style="left:630.7px;top:1630.0px;font-size:15.5px;color:#f4f4f4;letter-spacing:-0.09px;">Line Plot</span>
<span class="t" style="left:630.7px;top:1663.7px;font-size:15.5px;color:#f4f4f4;letter-spacing:0.13px;">Instrument</span>
<span class="t" style="left:630.7px;top:1697.3px;font-size:15.5px;color:#f4f4f4;letter-spacing:-0.25px;">Channel</span>
<span class="t" style="left:630.7px;top:1731.0px;font-size:15.5px;color:#f4f4f4;letter-spacing:-0.02px;">Measurement</span>
<span class="t" style="left:630.7px;top:1764.6px;font-size:15.5px;color:#f4f4f4;letter-spacing:0.02px;">Interval</span>
<div class="a" style="left:731.6px;top:1612.2px;width:2557.4px;height:32.4px;background:#576675;"></div>
<span class="t" style="left:737.7px;top:1620.5px;font-size:15.5px;color:#fff;letter-spacing:-1.30px;">SEQUENCE STEP SELECTION</span>
<div class="a" style="left:738.0px;top:1651.0px;width:141.3px;height:141.3px;background:#333333;box-shadow:inset 0 0 0 1.5px #e0e0e0;border-radius:4px;"></div>
<div class="a" style="left:746.7px;top:1659.7px;width:123.9px;height:123.9px;background:#242424;"></div>
<svg class="a" style="left:738.0px;top:1651px" width="142" height="142"><path d="M26.4 92.4H66.6V39.4H110" fill="none" stroke="#fff" stroke-width="6.4"/></svg>
<div class="a" style="left:881.3px;top:1651.0px;width:141.3px;height:141.3px;background:#333333;box-shadow:inset 0 0 0 1.5px #e0e0e0;border-radius:4px;"></div>
<div class="a" style="left:890.0px;top:1659.7px;width:123.9px;height:123.9px;background:#242424;"></div>
<svg class="a" style="left:881.3px;top:1651px" width="142" height="142"><path d="M11.6 73.6C20 50 30 23.5 41.6 23.5C58 23.5 80 121 98.6 121C109 121 119 95 127 70.6" fill="none" stroke="#fff" stroke-width="3.4" stroke-linecap="round"/></svg>
<div class="a" style="left:1024.2px;top:1651.0px;width:141.3px;height:141.3px;background:#333333;box-shadow:inset 0 0 0 1.5px #e0e0e0;border-radius:4px;"></div>
<div class="a" style="left:1032.9px;top:1659.7px;width:123.9px;height:123.9px;background:#242424;"></div>
<svg class="a" style="left:1024.2px;top:1651px" width="142" height="142"><path d="M13.6 122.8H44.8L94.3 25.3H124.2" fill="none" stroke="#fff" stroke-width="3.4" stroke-linecap="round" stroke-linejoin="round"/></svg>
<div class="a" style="left:1166.8px;top:1651.0px;width:141.3px;height:141.3px;background:#333333;box-shadow:inset 0 0 0 1.5px #e0e0e0;border-radius:4px;"></div>
<div class="a" style="left:1175.5px;top:1659.7px;width:123.9px;height:123.9px;background:#242424;"></div>
<svg class="a" style="left:1166.8px;top:1651px" width="142" height="142"><path d="M14.4 74.7L41.6 25.3L95.4 122.3L123.1 72.8" fill="none" stroke="#fff" stroke-width="3.4" stroke-linecap="round" stroke-linejoin="round"/></svg>
<div class="a" style="left:0.0px;top:0.0px;width:3.4px;height:1795.0px;background:#000;"></div>
</body></html>
